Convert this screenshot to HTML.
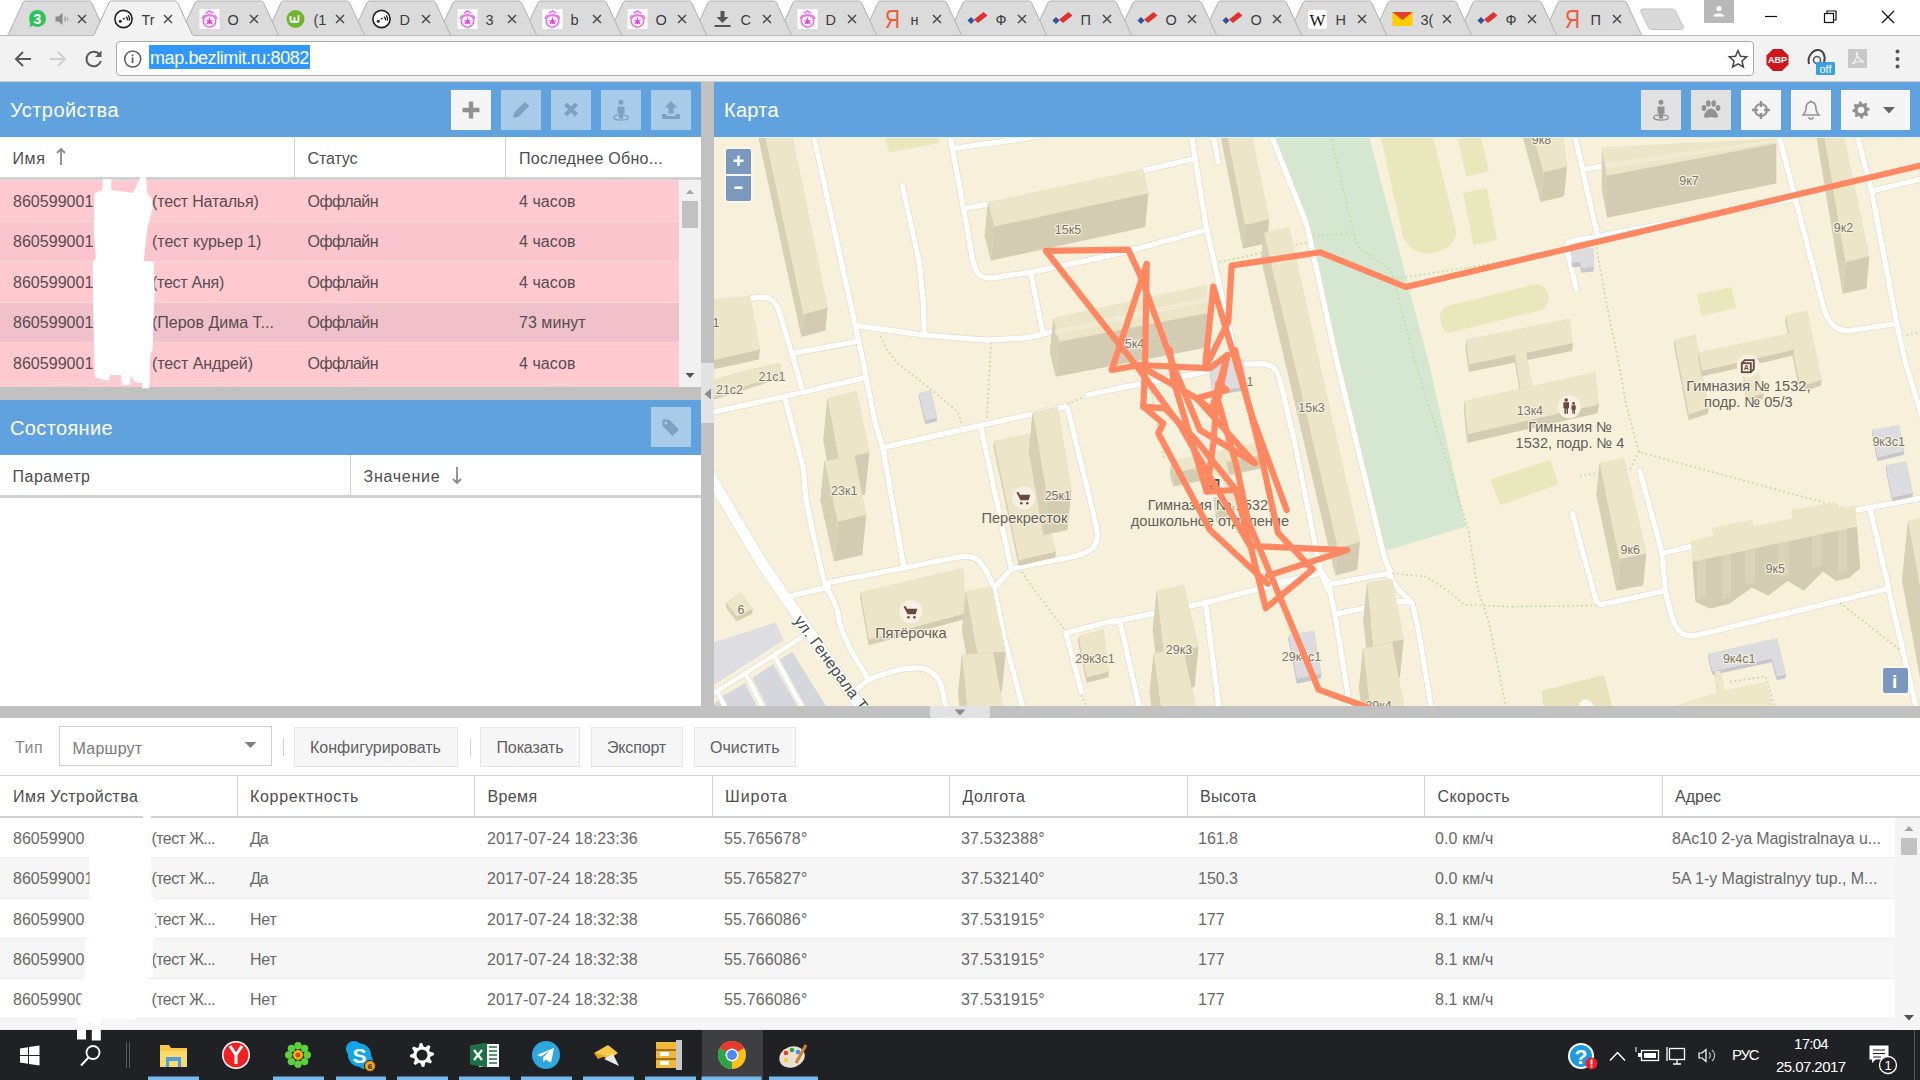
<!DOCTYPE html>
<html><head><meta charset="utf-8"><title>Traccar</title><style>
*{box-sizing:border-box;margin:0;padding:0}
html,body{width:1920px;height:1080px;overflow:hidden;background:#fff}
body{font-family:"Liberation Sans",sans-serif;position:relative;color:#404040}
.abs{position:absolute}
.t{position:absolute;white-space:nowrap;font-size:16px;line-height:20px;color:#4d4d4d}
.hdr{position:absolute;background:#5fa2dd}
.hdr .title{position:absolute;left:10px;top:16px;font-size:21px;line-height:24px;color:#fff;white-space:nowrap}
.btn{position:absolute;width:40px;height:40px;background:#f5f5f5}
.btn.dis{background:#a9cbea}
.btn svg{position:absolute;left:0;top:0}
.colh{position:absolute;background:#fff;border-right:1px solid #d0d0d0;font-size:16px;color:#404040;white-space:nowrap}
.colh span{position:absolute;left:12px;top:11px;line-height:20px}
.row{position:absolute;left:0}
.row span{position:absolute;top:10px;line-height:20px;font-size:16px;white-space:nowrap;color:#404040}
.tb{position:absolute;top:728px;height:39px;background:#f6f6f6;border:1px solid #e4e4e4;font-size:16px;color:#606060;text-align:center;line-height:37px;white-space:nowrap}
</style></head><body>
<div class="abs" style="left:0;top:0;width:1920px;height:36px;background:#fff"></div>
<div class="abs" style="left:0;top:35px;width:1920px;height:47px;background:#f2f2f2;border-bottom:1px solid #cdcdcd"></div>
<svg class="abs" style="left:0;top:0" width="1920" height="82" viewBox="0 0 1920 82"><path d="M1541.5 35.5 C1542.5 35.5 1543.1 35 1543.7 33.5 L1557.8 3 C1558.4 1.7 1559.3 1 1560.8 1 L1623.7 1 C1625.2 1 1626.1 1.7 1626.7 3 L1640.8 33.5 C1641.4 35 1642.0 35.5 1643.0 35.5 Z" fill="#dbdbdb"/><path d="M1541.5 35.5 C1542.5 35.5 1543.1 35 1543.7 33.5 L1557.8 3 C1558.4 1.7 1559.3 1 1560.8 1 L1623.7 1 C1625.2 1 1626.1 1.7 1626.7 3 L1640.8 33.5 C1641.4 35 1642.0 35.5 1643.0 35.5" fill="none" stroke="#b0b0b0" stroke-width="1"/><path d="M1456.5 35.5 C1457.5 35.5 1458.1 35 1458.7 33.5 L1472.8 3 C1473.4 1.7 1474.3 1 1475.8 1 L1538.7 1 C1540.2 1 1541.1 1.7 1541.7 3 L1555.8 33.5 C1556.4 35 1557.0 35.5 1558.0 35.5 Z" fill="#dbdbdb"/><path d="M1456.5 35.5 C1457.5 35.5 1458.1 35 1458.7 33.5 L1472.8 3 C1473.4 1.7 1474.3 1 1475.8 1 L1538.7 1 C1540.2 1 1541.1 1.7 1541.7 3 L1555.8 33.5 C1556.4 35 1557.0 35.5 1558.0 35.5" fill="none" stroke="#b0b0b0" stroke-width="1"/><path d="M1371.5 35.5 C1372.5 35.5 1373.1 35 1373.7 33.5 L1387.8 3 C1388.4 1.7 1389.3 1 1390.8 1 L1453.7 1 C1455.2 1 1456.1 1.7 1456.7 3 L1470.8 33.5 C1471.4 35 1472.0 35.5 1473.0 35.5 Z" fill="#dbdbdb"/><path d="M1371.5 35.5 C1372.5 35.5 1373.1 35 1373.7 33.5 L1387.8 3 C1388.4 1.7 1389.3 1 1390.8 1 L1453.7 1 C1455.2 1 1456.1 1.7 1456.7 3 L1470.8 33.5 C1471.4 35 1472.0 35.5 1473.0 35.5" fill="none" stroke="#b0b0b0" stroke-width="1"/><path d="M1286.5 35.5 C1287.5 35.5 1288.1 35 1288.7 33.5 L1302.8 3 C1303.4 1.7 1304.3 1 1305.8 1 L1368.7 1 C1370.2 1 1371.1 1.7 1371.7 3 L1385.8 33.5 C1386.4 35 1387.0 35.5 1388.0 35.5 Z" fill="#dbdbdb"/><path d="M1286.5 35.5 C1287.5 35.5 1288.1 35 1288.7 33.5 L1302.8 3 C1303.4 1.7 1304.3 1 1305.8 1 L1368.7 1 C1370.2 1 1371.1 1.7 1371.7 3 L1385.8 33.5 C1386.4 35 1387.0 35.5 1388.0 35.5" fill="none" stroke="#b0b0b0" stroke-width="1"/><path d="M1201.5 35.5 C1202.5 35.5 1203.1 35 1203.7 33.5 L1217.8 3 C1218.4 1.7 1219.3 1 1220.8 1 L1283.7 1 C1285.2 1 1286.1 1.7 1286.7 3 L1300.8 33.5 C1301.4 35 1302.0 35.5 1303.0 35.5 Z" fill="#dbdbdb"/><path d="M1201.5 35.5 C1202.5 35.5 1203.1 35 1203.7 33.5 L1217.8 3 C1218.4 1.7 1219.3 1 1220.8 1 L1283.7 1 C1285.2 1 1286.1 1.7 1286.7 3 L1300.8 33.5 C1301.4 35 1302.0 35.5 1303.0 35.5" fill="none" stroke="#b0b0b0" stroke-width="1"/><path d="M1116.5 35.5 C1117.5 35.5 1118.1 35 1118.7 33.5 L1132.8 3 C1133.4 1.7 1134.3 1 1135.8 1 L1198.7 1 C1200.2 1 1201.1 1.7 1201.7 3 L1215.8 33.5 C1216.4 35 1217.0 35.5 1218.0 35.5 Z" fill="#dbdbdb"/><path d="M1116.5 35.5 C1117.5 35.5 1118.1 35 1118.7 33.5 L1132.8 3 C1133.4 1.7 1134.3 1 1135.8 1 L1198.7 1 C1200.2 1 1201.1 1.7 1201.7 3 L1215.8 33.5 C1216.4 35 1217.0 35.5 1218.0 35.5" fill="none" stroke="#b0b0b0" stroke-width="1"/><path d="M1031.5 35.5 C1032.5 35.5 1033.1 35 1033.7 33.5 L1047.8 3 C1048.4 1.7 1049.3 1 1050.8 1 L1113.7 1 C1115.2 1 1116.1 1.7 1116.7 3 L1130.8 33.5 C1131.4 35 1132.0 35.5 1133.0 35.5 Z" fill="#dbdbdb"/><path d="M1031.5 35.5 C1032.5 35.5 1033.1 35 1033.7 33.5 L1047.8 3 C1048.4 1.7 1049.3 1 1050.8 1 L1113.7 1 C1115.2 1 1116.1 1.7 1116.7 3 L1130.8 33.5 C1131.4 35 1132.0 35.5 1133.0 35.5" fill="none" stroke="#b0b0b0" stroke-width="1"/><path d="M946.5 35.5 C947.5 35.5 948.1 35 948.7 33.5 L962.8 3 C963.4 1.7 964.3 1 965.8 1 L1028.7 1 C1030.2 1 1031.1 1.7 1031.7 3 L1045.8 33.5 C1046.4 35 1047.0 35.5 1048.0 35.5 Z" fill="#dbdbdb"/><path d="M946.5 35.5 C947.5 35.5 948.1 35 948.7 33.5 L962.8 3 C963.4 1.7 964.3 1 965.8 1 L1028.7 1 C1030.2 1 1031.1 1.7 1031.7 3 L1045.8 33.5 C1046.4 35 1047.0 35.5 1048.0 35.5" fill="none" stroke="#b0b0b0" stroke-width="1"/><path d="M861.5 35.5 C862.5 35.5 863.1 35 863.7 33.5 L877.8 3 C878.4 1.7 879.3 1 880.8 1 L943.7 1 C945.2 1 946.1 1.7 946.7 3 L960.8 33.5 C961.4 35 962.0 35.5 963.0 35.5 Z" fill="#dbdbdb"/><path d="M861.5 35.5 C862.5 35.5 863.1 35 863.7 33.5 L877.8 3 C878.4 1.7 879.3 1 880.8 1 L943.7 1 C945.2 1 946.1 1.7 946.7 3 L960.8 33.5 C961.4 35 962.0 35.5 963.0 35.5" fill="none" stroke="#b0b0b0" stroke-width="1"/><path d="M776.5 35.5 C777.5 35.5 778.1 35 778.7 33.5 L792.8 3 C793.4 1.7 794.3 1 795.8 1 L858.7 1 C860.2 1 861.1 1.7 861.7 3 L875.8 33.5 C876.4 35 877.0 35.5 878.0 35.5 Z" fill="#dbdbdb"/><path d="M776.5 35.5 C777.5 35.5 778.1 35 778.7 33.5 L792.8 3 C793.4 1.7 794.3 1 795.8 1 L858.7 1 C860.2 1 861.1 1.7 861.7 3 L875.8 33.5 C876.4 35 877.0 35.5 878.0 35.5" fill="none" stroke="#b0b0b0" stroke-width="1"/><path d="M691.5 35.5 C692.5 35.5 693.1 35 693.7 33.5 L707.8 3 C708.4 1.7 709.3 1 710.8 1 L773.7 1 C775.2 1 776.1 1.7 776.7 3 L790.8 33.5 C791.4 35 792.0 35.5 793.0 35.5 Z" fill="#dbdbdb"/><path d="M691.5 35.5 C692.5 35.5 693.1 35 693.7 33.5 L707.8 3 C708.4 1.7 709.3 1 710.8 1 L773.7 1 C775.2 1 776.1 1.7 776.7 3 L790.8 33.5 C791.4 35 792.0 35.5 793.0 35.5" fill="none" stroke="#b0b0b0" stroke-width="1"/><path d="M606.5 35.5 C607.5 35.5 608.1 35 608.7 33.5 L622.8 3 C623.4 1.7 624.3 1 625.8 1 L688.7 1 C690.2 1 691.1 1.7 691.7 3 L705.8 33.5 C706.4 35 707.0 35.5 708.0 35.5 Z" fill="#dbdbdb"/><path d="M606.5 35.5 C607.5 35.5 608.1 35 608.7 33.5 L622.8 3 C623.4 1.7 624.3 1 625.8 1 L688.7 1 C690.2 1 691.1 1.7 691.7 3 L705.8 33.5 C706.4 35 707.0 35.5 708.0 35.5" fill="none" stroke="#b0b0b0" stroke-width="1"/><path d="M521.5 35.5 C522.5 35.5 523.1 35 523.7 33.5 L537.8 3 C538.4 1.7 539.3 1 540.8 1 L603.7 1 C605.2 1 606.1 1.7 606.7 3 L620.8 33.5 C621.4 35 622.0 35.5 623.0 35.5 Z" fill="#dbdbdb"/><path d="M521.5 35.5 C522.5 35.5 523.1 35 523.7 33.5 L537.8 3 C538.4 1.7 539.3 1 540.8 1 L603.7 1 C605.2 1 606.1 1.7 606.7 3 L620.8 33.5 C621.4 35 622.0 35.5 623.0 35.5" fill="none" stroke="#b0b0b0" stroke-width="1"/><path d="M436.5 35.5 C437.5 35.5 438.1 35 438.7 33.5 L452.8 3 C453.4 1.7 454.3 1 455.8 1 L518.7 1 C520.2 1 521.1 1.7 521.7 3 L535.8 33.5 C536.4 35 537.0 35.5 538.0 35.5 Z" fill="#dbdbdb"/><path d="M436.5 35.5 C437.5 35.5 438.1 35 438.7 33.5 L452.8 3 C453.4 1.7 454.3 1 455.8 1 L518.7 1 C520.2 1 521.1 1.7 521.7 3 L535.8 33.5 C536.4 35 537.0 35.5 538.0 35.5" fill="none" stroke="#b0b0b0" stroke-width="1"/><path d="M350.5 35.5 C351.5 35.5 352.1 35 352.7 33.5 L366.8 3 C367.4 1.7 368.3 1 369.8 1 L432.7 1 C434.2 1 435.1 1.7 435.7 3 L449.8 33.5 C450.4 35 451.0 35.5 452.0 35.5 Z" fill="#dbdbdb"/><path d="M350.5 35.5 C351.5 35.5 352.1 35 352.7 33.5 L366.8 3 C367.4 1.7 368.3 1 369.8 1 L432.7 1 C434.2 1 435.1 1.7 435.7 3 L449.8 33.5 C450.4 35 451.0 35.5 452.0 35.5" fill="none" stroke="#b0b0b0" stroke-width="1"/><path d="M264.5 35.5 C265.5 35.5 266.1 35 266.7 33.5 L280.8 3 C281.4 1.7 282.3 1 283.8 1 L346.7 1 C348.2 1 349.1 1.7 349.7 3 L363.8 33.5 C364.4 35 365.0 35.5 366.0 35.5 Z" fill="#dbdbdb"/><path d="M264.5 35.5 C265.5 35.5 266.1 35 266.7 33.5 L280.8 3 C281.4 1.7 282.3 1 283.8 1 L346.7 1 C348.2 1 349.1 1.7 349.7 3 L363.8 33.5 C364.4 35 365.0 35.5 366.0 35.5" fill="none" stroke="#b0b0b0" stroke-width="1"/><path d="M178.5 35.5 C179.5 35.5 180.1 35 180.7 33.5 L194.8 3 C195.4 1.7 196.3 1 197.8 1 L260.7 1 C262.2 1 263.1 1.7 263.7 3 L277.8 33.5 C278.4 35 279.0 35.5 280.0 35.5 Z" fill="#dbdbdb"/><path d="M178.5 35.5 C179.5 35.5 180.1 35 180.7 33.5 L194.8 3 C195.4 1.7 196.3 1 197.8 1 L260.7 1 C262.2 1 263.1 1.7 263.7 3 L277.8 33.5 C278.4 35 279.0 35.5 280.0 35.5" fill="none" stroke="#b0b0b0" stroke-width="1"/><path d="M6.5 35.5 C7.5 35.5 8.1 35 8.7 33.5 L22.8 3 C23.4 1.7 24.3 1 25.8 1 L88.7 1 C90.2 1 91.1 1.7 91.7 3 L105.8 33.5 C106.4 35 107.0 35.5 108.0 35.5 Z" fill="#dbdbdb"/><path d="M6.5 35.5 C7.5 35.5 8.1 35 8.7 33.5 L22.8 3 C23.4 1.7 24.3 1 25.8 1 L88.7 1 C90.2 1 91.1 1.7 91.7 3 L105.8 33.5 C106.4 35 107.0 35.5 108.0 35.5" fill="none" stroke="#b0b0b0" stroke-width="1"/><path d="M1643 9 L1672 9 C1674 9 1675 10 1676 12 L1683 26 C1684 28 1683 29.500 1681 29.500 L1652 29.500 C1650 29.500 1649 28.500 1648 26.500 L1641 12 C1640 10 1641 9 1643 9Z" fill="#d9d9d9" stroke="#c4c4c4" stroke-width="1"/><rect x="0" y="35" width="1920" height="1" fill="#b9b9b9"/><path d="M92.5 35.5 C93.5 35.5 94.1 35 94.7 33.5 L108.8 3 C109.4 1.7 110.3 1 111.8 1 L174.7 1 C176.2 1 177.1 1.7 177.7 3 L191.8 33.5 C192.4 35 193.0 35.5 194.0 35.5 L194.0 37 L92.5 37 Z" fill="#f2f2f2"/><path d="M92.5 35.5 C93.5 35.5 94.1 35 94.7 33.5 L108.8 3 C109.4 1.7 110.3 1 111.8 1 L174.7 1 C176.2 1 177.1 1.7 177.7 3 L191.8 33.5 C192.4 35 193.0 35.5 194.0 35.5" fill="none" stroke="#ababab" stroke-width="1"/><path d="M78.0 15l8 8m0-8l-8 8" stroke="#4a4a4a" stroke-width="1.5" fill="none"/><circle cx="37.5" cy="18.5" r="8.5" fill="#2fc15a"/><path d="M29.5 27l1-5l4 3z" fill="#2fc15a"/><text x="37.5" y="24" font-size="14" font-weight="bold" fill="#fff" text-anchor="middle" font-family="Liberation Sans">3</text><path d="M55.5 16.500h3l4-3.500v12l-4-3.500h-3z" fill="#8a8a8a"/><path d="M65.0 16.500v5M67.5 17.500v3" stroke="#9a9a9a" stroke-width="1.2"/><path d="M164.0 15l8 8m0-8l-8 8" stroke="#4a4a4a" stroke-width="1.5" fill="none"/><text x="141.5" y="24.500" font-size="14.500" fill="#3c3c3c" font-family="Liberation Sans">Tr</text><g transform="translate(123.5,19)"><circle r="8.6" fill="#fff" stroke="#222" stroke-width="1.6"/><circle cx="-3.2" cy="2.2" r="1.5" fill="#222"/><path d="M-0.5 0.3l1.6-1.2M2.5-2.2a4 4 0 0 1 1.6 3.6M4.6-3.6a6 6 0 0 1 1.3 5.2" stroke="#222" stroke-width="1.4" fill="none"/></g><path d="M250.0 15l8 8m0-8l-8 8" stroke="#4a4a4a" stroke-width="1.5" fill="none"/><text x="227.5" y="24.500" font-size="14.500" fill="#3c3c3c" font-family="Liberation Sans">O</text><g transform="translate(199.5,9) scale(1.25)"><rect width="16" height="16" fill="#fff"/><circle cx="8" cy="9.500" r="5" fill="none" stroke="#ee66ee" stroke-width="1.200"/><path d="M3 5.500h10M5 3.500l3-2l3 2M2 8l1.500-3M14 8l-1.500-3" stroke="#ee66ee" stroke-width="1.100" fill="none"/><path d="M5.500 9.500h5M8 7v5M6 12l2-2.500l2 2.500" stroke="#e040e0" stroke-width="1.100" fill="none"/></g><path d="M336.0 15l8 8m0-8l-8 8" stroke="#4a4a4a" stroke-width="1.5" fill="none"/><text x="313.5" y="24.500" font-size="14.500" fill="#3c3c3c" font-family="Liberation Sans">(1</text><circle cx="295.5" cy="19" r="9" fill="#6fb62c"/><path d="M290.5 16v4a2 2 0 0 0 4 0v-3m0 3a2 2 0 0 0 4 0v-5" stroke="#fff" stroke-width="1.8" fill="none"/><path d="M422.0 15l8 8m0-8l-8 8" stroke="#4a4a4a" stroke-width="1.5" fill="none"/><text x="399.5" y="24.500" font-size="14.500" fill="#3c3c3c" font-family="Liberation Sans">D</text><g transform="translate(381.5,19)"><circle r="8.6" fill="#fff" stroke="#222" stroke-width="1.6"/><circle cx="-3.2" cy="2.2" r="1.5" fill="#222"/><path d="M-0.5 0.3l1.6-1.2M2.5-2.2a4 4 0 0 1 1.6 3.6M4.6-3.6a6 6 0 0 1 1.3 5.2" stroke="#222" stroke-width="1.4" fill="none"/></g><path d="M508.0 15l8 8m0-8l-8 8" stroke="#4a4a4a" stroke-width="1.5" fill="none"/><text x="485.5" y="24.500" font-size="14.500" fill="#3c3c3c" font-family="Liberation Sans">3</text><g transform="translate(457.5,9) scale(1.25)"><rect width="16" height="16" fill="#fff"/><circle cx="8" cy="9.500" r="5" fill="none" stroke="#ee66ee" stroke-width="1.200"/><path d="M3 5.500h10M5 3.500l3-2l3 2M2 8l1.500-3M14 8l-1.500-3" stroke="#ee66ee" stroke-width="1.100" fill="none"/><path d="M5.500 9.500h5M8 7v5M6 12l2-2.500l2 2.500" stroke="#e040e0" stroke-width="1.100" fill="none"/></g><path d="M593.0 15l8 8m0-8l-8 8" stroke="#4a4a4a" stroke-width="1.5" fill="none"/><text x="570.5" y="24.500" font-size="14.500" fill="#3c3c3c" font-family="Liberation Sans">b</text><g transform="translate(542.5,9) scale(1.25)"><rect width="16" height="16" fill="#fff"/><circle cx="8" cy="9.500" r="5" fill="none" stroke="#ee66ee" stroke-width="1.200"/><path d="M3 5.500h10M5 3.500l3-2l3 2M2 8l1.500-3M14 8l-1.500-3" stroke="#ee66ee" stroke-width="1.100" fill="none"/><path d="M5.500 9.500h5M8 7v5M6 12l2-2.500l2 2.500" stroke="#e040e0" stroke-width="1.100" fill="none"/></g><path d="M678.0 15l8 8m0-8l-8 8" stroke="#4a4a4a" stroke-width="1.5" fill="none"/><text x="655.5" y="24.500" font-size="14.500" fill="#3c3c3c" font-family="Liberation Sans">O</text><g transform="translate(627.5,9) scale(1.25)"><rect width="16" height="16" fill="#fff"/><circle cx="8" cy="9.500" r="5" fill="none" stroke="#ee66ee" stroke-width="1.200"/><path d="M3 5.500h10M5 3.500l3-2l3 2M2 8l1.500-3M14 8l-1.500-3" stroke="#ee66ee" stroke-width="1.100" fill="none"/><path d="M5.500 9.500h5M8 7v5M6 12l2-2.500l2 2.500" stroke="#e040e0" stroke-width="1.100" fill="none"/></g><path d="M763.0 15l8 8m0-8l-8 8" stroke="#4a4a4a" stroke-width="1.5" fill="none"/><text x="740.5" y="24.500" font-size="14.500" fill="#3c3c3c" font-family="Liberation Sans">C</text><path d="M720.5 11h4v6h4l-6 6l-6-6h4z" fill="#555"/><rect x="714.5" y="25" width="16" height="2" fill="#555"/><path d="M848.0 15l8 8m0-8l-8 8" stroke="#4a4a4a" stroke-width="1.5" fill="none"/><text x="825.5" y="24.500" font-size="14.500" fill="#3c3c3c" font-family="Liberation Sans">D</text><g transform="translate(797.5,9) scale(1.25)"><rect width="16" height="16" fill="#fff"/><circle cx="8" cy="9.500" r="5" fill="none" stroke="#ee66ee" stroke-width="1.200"/><path d="M3 5.500h10M5 3.500l3-2l3 2M2 8l1.500-3M14 8l-1.500-3" stroke="#ee66ee" stroke-width="1.100" fill="none"/><path d="M5.500 9.500h5M8 7v5M6 12l2-2.500l2 2.500" stroke="#e040e0" stroke-width="1.100" fill="none"/></g><path d="M933.0 15l8 8m0-8l-8 8" stroke="#4a4a4a" stroke-width="1.5" fill="none"/><text x="910.5" y="24.500" font-size="14.500" fill="#3c3c3c" font-family="Liberation Sans">н</text><text x="892.5" y="28" font-size="26" fill="#ee5a3a" text-anchor="middle" font-family="Liberation Sans" transform="translate(892.5 0) scale(0.8 1) translate(-892.5 0)">Я</text><path d="M1018.0 15l8 8m0-8l-8 8" stroke="#4a4a4a" stroke-width="1.5" fill="none"/><text x="995.5" y="24.500" font-size="14.500" fill="#3c3c3c" font-family="Liberation Sans">Ф</text><g transform="translate(977.5,18)"><path d="M-10 2.500l3.500-3.500l3.500 3.500l-3.500 3.500z" fill="#2f4f9f"/><path d="M-3.500 1.500l9.500-7.500l4 3.500l-9.500 7.500z" fill="#e03030"/></g><path d="M1103.0 15l8 8m0-8l-8 8" stroke="#4a4a4a" stroke-width="1.5" fill="none"/><text x="1080.5" y="24.500" font-size="14.500" fill="#3c3c3c" font-family="Liberation Sans">П</text><g transform="translate(1062.5,18)"><path d="M-10 2.500l3.500-3.500l3.500 3.500l-3.500 3.500z" fill="#2f4f9f"/><path d="M-3.500 1.500l9.500-7.500l4 3.500l-9.500 7.500z" fill="#e03030"/></g><path d="M1188.0 15l8 8m0-8l-8 8" stroke="#4a4a4a" stroke-width="1.5" fill="none"/><text x="1165.5" y="24.500" font-size="14.500" fill="#3c3c3c" font-family="Liberation Sans">О</text><g transform="translate(1147.5,18)"><path d="M-10 2.500l3.500-3.500l3.500 3.500l-3.500 3.500z" fill="#2f4f9f"/><path d="M-3.500 1.500l9.500-7.500l4 3.500l-9.500 7.500z" fill="#e03030"/></g><path d="M1273.0 15l8 8m0-8l-8 8" stroke="#4a4a4a" stroke-width="1.5" fill="none"/><text x="1250.5" y="24.500" font-size="14.500" fill="#3c3c3c" font-family="Liberation Sans">О</text><g transform="translate(1232.5,18)"><path d="M-10 2.500l3.500-3.500l3.500 3.500l-3.500 3.500z" fill="#2f4f9f"/><path d="M-3.500 1.500l9.500-7.500l4 3.500l-9.500 7.500z" fill="#e03030"/></g><path d="M1358.0 15l8 8m0-8l-8 8" stroke="#4a4a4a" stroke-width="1.5" fill="none"/><text x="1335.5" y="24.500" font-size="14.500" fill="#3c3c3c" font-family="Liberation Sans">H</text><rect x="1308.0" y="10" width="19" height="19" rx="3" fill="#fff"/><text x="1317.5" y="26" font-size="17" fill="#111" text-anchor="middle" font-family="Liberation Serif">W</text><path d="M1443.0 15l8 8m0-8l-8 8" stroke="#4a4a4a" stroke-width="1.5" fill="none"/><text x="1420.5" y="24.500" font-size="14.500" fill="#3c3c3c" font-family="Liberation Sans">3(</text><rect x="1392.5" y="12" width="20" height="14" fill="#ffcc00"/><path d="M1392.5 12l10 8l10-8z" fill="#e84030"/><path d="M1528.0 15l8 8m0-8l-8 8" stroke="#4a4a4a" stroke-width="1.5" fill="none"/><text x="1505.5" y="24.500" font-size="14.500" fill="#3c3c3c" font-family="Liberation Sans">Ф</text><g transform="translate(1487.5,18)"><path d="M-10 2.500l3.500-3.500l3.500 3.500l-3.500 3.500z" fill="#2f4f9f"/><path d="M-3.500 1.500l9.500-7.500l4 3.500l-9.500 7.500z" fill="#e03030"/></g><path d="M1613.0 15l8 8m0-8l-8 8" stroke="#4a4a4a" stroke-width="1.5" fill="none"/><text x="1590.5" y="24.500" font-size="14.500" fill="#3c3c3c" font-family="Liberation Sans">П</text><text x="1572.5" y="28" font-size="26" fill="#ee5a3a" text-anchor="middle" font-family="Liberation Sans" transform="translate(1572.5 0) scale(0.8 1) translate(-1572.5 0)">Я</text><rect x="1704" y="0" width="30" height="23" fill="#b8b8b8"/><circle cx="1719" cy="8.500" r="2.6" fill="#fff"/><path d="M1713.500 16.500c0-4 11-4 11 0z" fill="#fff"/><path d="M1765 16.500h12" stroke="#111" stroke-width="1.2"/><rect x="1824.500" y="13.500" width="9" height="9" fill="none" stroke="#111" stroke-width="1.2"/><path d="M1827 13.500v-2.500h9v9h-2.500" fill="none" stroke="#111" stroke-width="1.2"/><path d="M1882 11l12 12m0-12l-12 12" stroke="#111" stroke-width="1.3"/><path d="M31 59H16m7-7l-7 7l7 7" stroke="#5a5a5a" stroke-width="2" fill="none"/><path d="M50 59h15m-7-7l7 7l-7 7" stroke="#cfcfcf" stroke-width="2" fill="none"/><path d="M99.500 54.500a7.300 7.300 0 1 0 1.300 6.500" stroke="#5a5a5a" stroke-width="2" fill="none"/><path d="M101.500 50.500v6.500h-6.500z" fill="#5a5a5a"/><rect x="116.500" y="41.500" width="1637" height="34" rx="3.500" fill="#fff" stroke="#ababab"/><circle cx="132.700" cy="59" r="8" fill="none" stroke="#5a5a5a" stroke-width="1.5"/><rect x="131.700" y="57.500" width="1.700" height="5.500" fill="#5a5a5a"/><rect x="131.700" y="54.500" width="1.700" height="1.800" fill="#5a5a5a"/><rect x="149" y="45" width="161" height="24" fill="#3297fd"/><path d="M1738 50.500l2.500 5.700l6.200 0.600l-4.700 4.100l1.400 6.100l-5.400-3.200l-5.400 3.200l1.400-6.100l-4.700-4.100l6.200-0.600z" fill="none" stroke="#444" stroke-width="1.5"/><path d="M1773 49h9l6.500 6.500v9l-6.500 6.500h-9l-6.500-6.500v-9z" fill="#d0161b"/><text x="1777.500" y="63" font-size="9" font-weight="bold" fill="#fff" text-anchor="middle" font-family="Liberation Sans">ABP</text><path d="M1809 64c-2-8 4-14 9-14s8 6 6 12" fill="none" stroke="#444" stroke-width="2"/><circle cx="1817" cy="60" r="3.500" fill="none" stroke="#555" stroke-width="1.5"/><rect x="1816" y="62" width="19" height="13" rx="1.500" fill="#3aa0e0"/><text x="1825.500" y="72.500" font-size="11" fill="#fff" text-anchor="middle" font-family="Liberation Sans">off</text><rect x="1848" y="49" width="19" height="19" fill="#c8c8c8"/><path d="M1852 64c4-3 6-9 5-12c-2 0 0 7 7 10c-4-1-9 0-12 2z" fill="none" stroke="#f2f2f2" stroke-width="1.2"/><circle cx="1897.500" cy="51.500" r="2" fill="#555"/><circle cx="1897.500" cy="59" r="2" fill="#555"/><circle cx="1897.500" cy="66.500" r="2" fill="#555"/></svg>
<div class="t" style="left:150.0px;top:46.8px;font-size:18px;line-height:22px;color:#fff;letter-spacing:-0.407px;">map.bezlimit.ru:8082</div>
<div class="abs" style="left:0;top:82px;width:1920px;height:636px;background:#c1c1c1"></div>
<div class="hdr" style="left:0;top:82px;width:701px;height:55px"></div>
<div class="t" style="left:10.0px;top:98.3px;font-size:20px;line-height:25px;color:#fff;letter-spacing:0.438px;">Устройства</div>
<div class="btn" style="left:451px;top:90px;width:40px;background:#f5f5f5"><svg width="40" height="40" viewBox="0 0 40 40"><path d="M17.800 11.500h4.400v6.300h6.300v4.400h-6.300v6.300h-4.400v-6.300h-6.300v-4.400h6.300z" fill="#919191"/></svg></div>
<div class="btn" style="left:501px;top:90px;width:40px;background:#a9cbea"><svg width="40" height="40" viewBox="0 0 40 40"><path d="M12.500 27.500l1-5l10.500-10.500l4 4l-10.500 10.500z M22 14l4 4" fill="#7f9fc3" stroke="#7f9fc3" stroke-width="0.500"/></svg></div>
<div class="btn" style="left:551px;top:90px;width:40px;background:#a9cbea"><svg width="40" height="40" viewBox="0 0 40 40"><path d="M13.500 15.500l2.500-2.500l4 4l4-4l2.500 2.500l-4 4l4 4l-2.500 2.500l-4-4l-4 4l-2.500-2.500l4-4z" fill="#7f9fc3" stroke="#7f9fc3" stroke-width="1" stroke-linejoin="round"/></svg></div>
<div class="btn" style="left:601px;top:90px;width:40px;background:#a9cbea"><svg width="40" height="40" viewBox="0 0 40 40"><circle cx="20" cy="12.300" r="2.500" fill="#7f9fc3"/><path d="M16.500 16.500h7v7h-1.500v5h-4v-5h-1.500z" fill="#7f9fc3"/><ellipse cx="20" cy="27.500" rx="7.300" ry="2.600" fill="none" stroke="#7f9fc3" stroke-width="1.300"/></svg></div>
<div class="btn" style="left:651px;top:90px;width:40px;background:#a9cbea"><svg width="40" height="40" viewBox="0 0 40 40"><path d="M20 11l6.500 6.500h-4v6h-5v-6h-4z" fill="#7f9fc3"/><path d="M11 24h4.500v2h9v-2h4.500v5h-18z" fill="#7f9fc3"/></svg></div>
<div class="abs" style="left:0;top:137px;width:701px;height:43px;background:#fff;border-bottom:3px solid #d0d0d0"></div>
<div class="abs" style="left:294px;top:137px;width:1px;height:40px;background:#d0d0d0"></div>
<div class="abs" style="left:505px;top:137px;width:1px;height:40px;background:#d0d0d0"></div>
<div class="t" style="left:12.5px;top:148.8px;font-size:16px;line-height:20px;color:#4d4d4d;letter-spacing:0.609px;">Имя</div>
<svg class="abs" style="left:54.5px;top:147px" width="12" height="20" viewBox="0 0 12 20"><path d="M6 2v16M2 6l4-4l4 4" stroke="#8a8a8a" stroke-width="1.800" fill="none"/></svg>
<div class="t" style="left:307.5px;top:148.8px;font-size:16px;line-height:20px;color:#4d4d4d;letter-spacing:-0.104px;">Статус</div>
<div class="t" style="left:519.0px;top:148.8px;font-size:16px;line-height:20px;color:#4d4d4d;letter-spacing:0.265px;">Последнее Обно...</div>
<div class="abs" style="left:0;top:180px;width:679px;height:40.5px;background:#ffc9d0;border-top:1px solid #f3d9dc"></div>
<div class="t" style="left:13.0px;top:191.8px;font-size:16px;line-height:20px;color:#584c50;letter-spacing:0.038px;">860599001</div>
<div class="t" style="left:152.0px;top:191.8px;font-size:16px;line-height:20px;color:#584c50;letter-spacing:-0.160px;">(тест Наталья)</div>
<div class="t" style="left:307.5px;top:191.8px;font-size:16px;line-height:20px;color:#584c50;letter-spacing:-0.569px;">Оффлайн</div>
<div class="t" style="left:519.0px;top:191.8px;font-size:16px;line-height:20px;color:#584c50;letter-spacing:0.042px;">4 часов</div>
<div class="abs" style="left:0;top:220.5px;width:679px;height:40.5px;background:#fac5cc;border-top:1px solid #f3d9dc"></div>
<div class="t" style="left:13.0px;top:232.3px;font-size:16px;line-height:20px;color:#584c50;letter-spacing:0.038px;">860599001</div>
<div class="t" style="left:152.0px;top:232.3px;font-size:16px;line-height:20px;color:#584c50;letter-spacing:-0.029px;">(тест курьер 1)</div>
<div class="t" style="left:307.5px;top:232.3px;font-size:16px;line-height:20px;color:#584c50;letter-spacing:-0.569px;">Оффлайн</div>
<div class="t" style="left:519.0px;top:232.3px;font-size:16px;line-height:20px;color:#584c50;letter-spacing:0.042px;">4 часов</div>
<div class="abs" style="left:0;top:261px;width:679px;height:40.5px;background:#ffc9d0;border-top:1px solid #f3d9dc"></div>
<div class="t" style="left:13.0px;top:272.8px;font-size:16px;line-height:20px;color:#584c50;letter-spacing:0.038px;">860599001</div>
<div class="t" style="left:152.0px;top:272.8px;font-size:16px;line-height:20px;color:#584c50;letter-spacing:-0.269px;">(тест Аня)</div>
<div class="t" style="left:307.5px;top:272.8px;font-size:16px;line-height:20px;color:#584c50;letter-spacing:-0.569px;">Оффлайн</div>
<div class="t" style="left:519.0px;top:272.8px;font-size:16px;line-height:20px;color:#584c50;letter-spacing:0.042px;">4 часов</div>
<div class="abs" style="left:0;top:301.5px;width:679px;height:40.5px;background:#f0c1ca;border-top:1px solid #f3d9dc"></div>
<div class="t" style="left:13.0px;top:313.3px;font-size:16px;line-height:20px;color:#584c50;letter-spacing:0.038px;">860599001</div>
<div class="t" style="left:152.0px;top:313.3px;font-size:16px;line-height:20px;color:#584c50;letter-spacing:-0.001px;">(Перов Дима Т...</div>
<div class="t" style="left:307.5px;top:313.3px;font-size:16px;line-height:20px;color:#584c50;letter-spacing:-0.569px;">Оффлайн</div>
<div class="t" style="left:519.0px;top:313.3px;font-size:16px;line-height:20px;color:#584c50;letter-spacing:0.041px;">73 минут</div>
<div class="abs" style="left:0;top:342px;width:679px;height:40px;background:#ffc9d0;border-top:1px solid #f3d9dc"></div>
<div class="t" style="left:13.0px;top:353.8px;font-size:16px;line-height:20px;color:#584c50;letter-spacing:0.038px;">860599001</div>
<div class="t" style="left:152.0px;top:353.8px;font-size:16px;line-height:20px;color:#584c50;letter-spacing:-0.085px;">(тест Андрей)</div>
<div class="t" style="left:307.5px;top:353.8px;font-size:16px;line-height:20px;color:#584c50;letter-spacing:-0.569px;">Оффлайн</div>
<div class="t" style="left:519.0px;top:353.8px;font-size:16px;line-height:20px;color:#584c50;letter-spacing:0.042px;">4 часов</div>
<div class="abs" style="left:0;top:382px;width:679px;height:5px;background:#ffc9d0;border-top:1px solid #f3d9dc"></div>
<div class="abs" style="left:679px;top:180px;width:22px;height:207px;background:#f1f1f1"></div>
<div class="abs" style="left:682px;top:201px;width:16px;height:27px;background:#c1c1c1"></div>
<svg class="abs" style="left:679px;top:180px" width="22" height="207"><path d="M7 14l4-4.500l4 4.500z" fill="#a3a3a3"/><path d="M6.500 193l4.500 5l4.500-5z" fill="#505050"/></svg>
<svg class="abs" style="left:80px;top:170px" width="90" height="225" viewBox="80 170 90 225"><path d="M102.500 179.200 L111.200 179.200 L111.200 190 L132 193 L134 191.100 L141.600 174.800 L146 174.800 L147.100 193.300 L151.400 197.700 L152.500 208.500 L147.100 230.300 L143.800 260.800 L153.600 261.900 L154.700 291.300 L153.600 317.400 L152.500 350 L150.300 354.400 L149.300 388.200 L142.300 388.200 L142.300 382.700 L136.200 382.700 L130.800 376.200 L129.700 384.900 L122 384.900 L121 375.100 L110 375.100 L109 380.500 L102.500 379.500 L94.800 377.300 L93.700 330 L92.700 263 L95.900 258 L93.700 230.300 L94.800 193.300 L102.500 190 Z" fill="#fff"/></svg>
<div class="hdr" style="left:0;top:400px;width:701px;height:55px"></div>
<div class="t" style="left:10.0px;top:416.3px;font-size:20px;line-height:25px;color:#fff;letter-spacing:0.356px;">Состояние</div>
<div class="btn" style="left:651px;top:407px;width:40px;background:#a9cbea"><svg width="40" height="40" viewBox="0 0 40 40"><path d="M11.500 12.500h6.500l10 10l-6.500 6.500l-10-10z" fill="#7f9fc3"/><circle cx="15" cy="16" r="1.600" fill="#a9cbea"/></svg></div>
<div class="abs" style="left:0;top:455px;width:701px;height:251px;background:#fff"></div>
<div class="abs" style="left:0;top:495px;width:701px;height:3px;background:#d0d0d0"></div>
<div class="abs" style="left:350px;top:455px;width:1px;height:40px;background:#d0d0d0"></div>
<div class="t" style="left:12.5px;top:466.8px;font-size:16px;line-height:20px;color:#4d4d4d;letter-spacing:0.521px;">Параметр</div>
<div class="t" style="left:363.5px;top:466.8px;font-size:16px;line-height:20px;color:#4d4d4d;letter-spacing:0.748px;">Значение</div>
<svg class="abs" style="left:450.5px;top:465px" width="12" height="20" viewBox="0 0 12 20"><path d="M6 2v16M2 14l4 4l4-4" stroke="#8a8a8a" stroke-width="1.800" fill="none"/></svg>
<div class="abs" style="left:701px;top:363px;width:13px;height:60px;background:#e2e2e2"></div>
<svg class="abs" style="left:701px;top:386px" width="13" height="16"><path d="M10 2.500v11l-6.500-5.500z" fill="#8c8c8c"/></svg>
<div class="abs" style="left:930px;top:706px;width:60px;height:12px;background:#e2e2e2"></div>
<svg class="abs" style="left:952px;top:706px" width="16" height="12"><path d="M2.500 3.500h11l-5.500 6z" fill="#8c8c8c"/></svg>
<div class="hdr" style="left:714px;top:82px;width:1206px;height:55px"></div>
<div class="t" style="left:724.0px;top:98.3px;font-size:20px;line-height:25px;color:#fff;letter-spacing:0.294px;">Карта</div>
<div class="btn" style="left:1641px;top:90px;width:40px;background:#e1e1e1"><svg width="40" height="40" viewBox="0 0 40 40"><circle cx="20" cy="12.300" r="2.500" fill="#919191"/><path d="M16.500 16.500h7v7h-1.500v5h-4v-5h-1.500z" fill="#919191"/><ellipse cx="20" cy="27.500" rx="7.300" ry="2.600" fill="none" stroke="#919191" stroke-width="1.300"/></svg></div>
<div class="btn" style="left:1691px;top:90px;width:40px;background:#e1e1e1"><svg width="40" height="40" viewBox="0 0 40 40"><ellipse cx="13" cy="18" rx="2.300" ry="3" fill="#919191"/><ellipse cx="27" cy="18" rx="2.300" ry="3" fill="#919191"/><ellipse cx="17.300" cy="13.500" rx="2.300" ry="3.200" fill="#919191"/><ellipse cx="22.700" cy="13.500" rx="2.300" ry="3.200" fill="#919191"/><path d="M20 18.500c3 0 7 5 7 7.500c0 2.500-3 2-7 1c-4 1-7 1.500-7-1c0-2.500 4-7.500 7-7.500z" fill="#919191"/></svg></div>
<div class="btn" style="left:1741px;top:90px;width:40px;background:#f5f5f5"><svg width="40" height="40" viewBox="0 0 40 40"><circle cx="20" cy="20" r="6" fill="none" stroke="#919191" stroke-width="2"/><path d="M20 11v6M20 23v6M11 20h6M23 20h6" stroke="#919191" stroke-width="2.400"/></svg></div>
<div class="btn" style="left:1791px;top:90px;width:40px;background:#f5f5f5"><svg width="40" height="40" viewBox="0 0 40 40"><path d="M20 12c-4 0-5 3.500-5 7c0 3-1.500 4.500-3 6h16c-1.500-1.500-3-3-3-6c0-3.500-1-7-5-7z" fill="none" stroke="#919191" stroke-width="1.600"/><path d="M18 27a2 2 0 0 0 4 0" fill="none" stroke="#919191" stroke-width="1.500"/><path d="M20 10.500v1.500" stroke="#919191" stroke-width="1.800"/></svg></div>
<div class="btn" style="left:1841px;top:90px;width:69px;background:#f5f5f5"><svg width="69" height="40" viewBox="0 0 69 40"><polygon points="28.53,18.30 28.70,20.00 26.47,21.29 26.10,22.53 27.23,24.83 26.15,26.15 23.67,25.49 22.53,26.10 21.70,28.53 20.00,28.70 18.71,26.47 17.47,26.10 15.17,27.23 13.85,26.15 14.51,23.67 13.90,22.53 11.47,21.70 11.30,20.00 13.53,18.71 13.90,17.47 12.77,15.17 13.85,13.85 16.33,14.51 17.47,13.90 18.30,11.47 20.00,11.30 21.29,13.53 22.53,13.90 24.83,12.77 26.15,13.85 25.49,16.33 26.10,17.47" fill="#919191"/><circle cx="20" cy="20" r="3.300" fill="#f5f5f5"/><path d="M42 17h12l-6 6.500z" fill="#666"/></svg></div>
<svg class="abs" style="left:714px;top:137px" width="1206" height="569" viewBox="714 137 1206 569"><rect x="714" y="137" width="1206" height="569" fill="#f7f1dc"/><polygon points="1274.4,134.9 1308.8,226.6 1340.0,362.0 1386.9,558.9 1385.0,551.0 1466.1,526.6 1428.6,362.0 1368.6,134.9" fill="#d5e7d0" /><polygon points="884.8,136.0 941.1,136.0 938.0,143.2 889.0,152.6" fill="#e9e8bd" /><path d="M1380.7 136.0 L1432.8 136.0 L1455.7 228.7 C1460.9 253.7 1410.9 266.2 1402.5 234.9 Z" fill="#e9e8bd"/><polygon points="1457.8,139.1 1480.7,136.0 1489.0,171.4 1466.1,176.6" fill="#e9e8bd" /><polygon points="1463.0,193.2 1486.9,188.0 1497.3,240.1 1473.4,245.3" fill="#e9e8bd" /><path d="M1446.9 306.0 L1532.5 285.0 C1550.2 280.1 1555.1 307.6 1538.9 310.8 L1453.4 331.8 C1438.8 336.7 1435.6 309.2 1446.9 306.0 Z" fill="#e9e8bd"/><polygon points="1696.9,294.5 1731.8,287.1 1736.0,308.3 1701.1,315.7" fill="#e9e8bd" /><polygon points="1490.5,479.4 1550.2,460.0 1558.3,484.3 1500.2,505.3" fill="#e9e8bd" /><polygon points="711.9,642.9 775.5,622.5 783.8,640.2 711.9,686.0" fill="#dddde2" /><polygon points="711.9,705.8 723.4,695.4 745.2,682.9 758.8,710.0 711.9,710.0" fill="#d6d6dd" /><polygon points="752.5,677.7 773.4,664.2 799.4,710.0 768.2,710.0" fill="#d6d6dd" /><polygon points="779.6,660.0 792.1,651.7 828.6,710.0 807.8,710.0" fill="#d6d6dd" /><path d="M809.6 117.0 L861.8 355.4 Q863.3 362.2 864.6 369.1 L873.1 413.1 Q874.4 420.0 876.4 426.7 L880.7 440.7 Q882.8 447.4 884.0 454.3 L904.0 568.2" fill="none" stroke="#e6dfcd" stroke-width="6.8" stroke-linecap="round" stroke-linejoin="round"/><path d="M902.5 186.0 L910.4 221.8 Q911.9 228.7 913.4 235.5 L917.7 255.2 Q919.2 262.0 919.9 269.0 L922.7 296.7 Q923.4 303.7 923.6 310.7 L924.4 333.9" fill="none" stroke="#e6dfcd" stroke-width="6.8" stroke-linecap="round" stroke-linejoin="round"/><path d="M855.5 325.5 L915.4 333.9 Q922.3 334.9 929.3 335.5 L977.9 339.5 Q984.8 340.1 991.8 339.8 L1019.5 338.4 Q1026.5 338.0 1033.3 336.4 L1052.5 331.8" fill="none" stroke="#e6dfcd" stroke-width="6.8" stroke-linecap="round" stroke-linejoin="round"/><path d="M949.4 132.8 L960.6 192.6 Q961.9 199.5 963.1 206.4 L972.2 257.2 Q973.4 264.1 975.5 269.3 L975.5 269.3 Q977.5 274.5 982.2 276.6 L982.2 276.6 Q986.9 278.7 993.8 277.7 L1023.7 273.4 Q1030.7 272.4 1037.5 271.0 L1107.2 256.2 Q1114.0 254.7 1120.8 252.9 L1206.7 229.7" fill="none" stroke="#e6dfcd" stroke-width="6.8" stroke-linecap="round" stroke-linejoin="round"/><path d="M953.6 148.5 L1041.1 136.0" fill="none" stroke="#e6dfcd" stroke-width="6.8" stroke-linecap="round" stroke-linejoin="round"/><path d="M967.1 207.8 L989.0 204.1" fill="none" stroke="#e6dfcd" stroke-width="6.8" stroke-linecap="round" stroke-linejoin="round"/><path d="M1030.7 272.4 L1042.8 332.8" fill="none" stroke="#e6dfcd" stroke-width="6.8" stroke-linecap="round" stroke-linejoin="round"/><path d="M750.5 298.5 L760.2 297.2 Q767.1 296.4 771.8 300.0 L771.8 300.0 Q776.5 303.7 778.6 309.9 L778.6 309.9 Q780.7 316.2 782.7 322.9 L792.2 355.3 Q794.2 362.0 796.2 368.7 L801.5 387.0" fill="none" stroke="#e6dfcd" stroke-width="6.8" stroke-linecap="round" stroke-linejoin="round"/><path d="M795.6 352.8 L858.0 341.3" fill="none" stroke="#e6dfcd" stroke-width="6.8" stroke-linecap="round" stroke-linejoin="round"/><path d="M1191.1 132.8 L1204.6 217.6 Q1205.7 224.5 1207.2 231.3 L1236.9 362.0" fill="none" stroke="#e6dfcd" stroke-width="6.8" stroke-linecap="round" stroke-linejoin="round"/><path d="M1213.0 134.9 L1218.2 162.0" fill="none" stroke="#e6dfcd" stroke-width="6.8" stroke-linecap="round" stroke-linejoin="round"/><path d="M1144.2 170.3 L1193.6 158.9" fill="none" stroke="#e6dfcd" stroke-width="6.8" stroke-linecap="round" stroke-linejoin="round"/><path d="M1270.2 132.8 L1304.1 218.0 Q1306.7 224.5 1308.2 231.3 L1335.4 355.2 Q1336.9 362.0 1338.6 368.8 L1383.2 553.1 Q1384.8 559.9 1388.0 566.2 L1390.0 570.3 Q1393.2 576.6 1390.0 574.5 L1390.0 574.5 Q1386.9 572.5 1390.8 578.3 L1395.5 585.4 Q1399.4 591.2 1404.8 595.7 L1406.5 597.2 Q1411.9 601.7 1413.5 608.5 L1416.6 621.9 Q1418.2 628.8 1419.3 635.7 L1431.7 710.0" fill="none" stroke="#e6dfcd" stroke-width="6.8" stroke-linecap="round" stroke-linejoin="round"/><path d="M1574.3 132.8 L1597.5 236.0" fill="none" stroke="#e6dfcd" stroke-width="6.8" stroke-linecap="round" stroke-linejoin="round"/><path d="M1587.0 168.7 L1602.4 166.2" fill="none" stroke="#e6dfcd" stroke-width="6.8" stroke-linecap="round" stroke-linejoin="round"/><path d="M1576.4 289.3 L1568.0 253.8 Q1566.4 247.0 1566.9 244.8 L1566.9 244.8 Q1567.3 242.7 1569.7 241.7 L1569.7 241.7 Q1572.2 240.6 1579.1 239.5 L1590.6 237.5 Q1597.5 236.4 1604.4 235.1 L1794.2 198.7" fill="none" stroke="#e6dfcd" stroke-width="6.8" stroke-linecap="round" stroke-linejoin="round"/><path d="M1778.3 132.8 L1780.9 142.9 Q1782.6 149.7 1784.3 156.5 L1793.5 191.6 Q1795.2 198.3 1797.0 205.1 L1823.1 305.7 Q1824.8 312.5 1828.0 318.8 L1828.1 318.9 Q1831.2 325.2 1837.5 328.3 L1837.6 328.4 Q1843.9 331.5 1850.8 330.5 L1896.7 323.5" fill="none" stroke="#e6dfcd" stroke-width="6.8" stroke-linecap="round" stroke-linejoin="round"/><path d="M1856.6 132.8 L1869.6 183.1 Q1871.4 189.9 1872.7 196.7 L1895.4 316.2 Q1896.7 323.1 1898.2 329.9 L1903.7 355.2 Q1905.2 362.0 1907.3 368.7 L1922.1 417.0" fill="none" stroke="#e6dfcd" stroke-width="6.8" stroke-linecap="round" stroke-linejoin="round"/><path d="M1872.4 190.9 L1922.1 178.9" fill="none" stroke="#e6dfcd" stroke-width="6.8" stroke-linecap="round" stroke-linejoin="round"/><path d="M711.9 412.4 L778.0 397.9 Q784.8 396.4 791.7 394.8 L864.4 377.8" fill="none" stroke="#e6dfcd" stroke-width="6.8" stroke-linecap="round" stroke-linejoin="round"/><path d="M784.8 397.4 L795.6 438.6 Q797.3 445.3 799.1 452.1 L802.2 463.6 Q804.0 470.3 804.3 477.3 L804.9 488.3 Q805.2 495.3 806.6 502.2 L810.5 521.8 Q811.9 528.7 813.5 535.5 L822.8 576.0 Q824.4 582.8 826.0 586.0 L826.0 586.0 Q827.5 589.2 830.8 595.4 L834.1 601.7 Q837.3 607.9 838.3 614.8 L839.0 619.7 Q840.0 626.7 843.0 633.0 L848.6 645.3 Q851.5 651.7 855.2 657.6 L868.2 678.8" fill="none" stroke="#e6dfcd" stroke-width="6.8" stroke-linecap="round" stroke-linejoin="round"/><path d="M883.2 447.4 L973.8 427.1 Q980.7 425.5 987.5 424.0 L1067.1 406.2" fill="none" stroke="#e6dfcd" stroke-width="6.8" stroke-linecap="round" stroke-linejoin="round"/><path d="M1087.3 395.3 L1109.3 390.2 Q1116.1 388.7 1123.0 387.4 L1196.7 373.7 Q1203.6 372.4 1210.4 370.8 L1232.2 365.7 Q1239.0 364.1 1246.0 364.0 L1261.2 363.8 Q1268.2 363.7 1272.3 367.0 L1272.3 367.0 Q1276.5 370.3 1278.6 376.6 L1278.6 376.6 Q1280.7 382.8 1282.3 389.7 L1293.7 438.5 Q1295.2 445.3 1296.6 452.2 L1318.9 563.5 Q1320.2 570.3 1322.8 576.9 L1327.5 589.1" fill="none" stroke="#e6dfcd" stroke-width="6.8" stroke-linecap="round" stroke-linejoin="round"/><path d="M980.7 426.6 L1010.9 567.2" fill="none" stroke="#e6dfcd" stroke-width="6.8" stroke-linecap="round" stroke-linejoin="round"/><path d="M1067.1 406.2 L1087.3 488.5 Q1089.0 495.3 1090.6 502.2 L1096.2 526.0 Q1097.8 532.8 1097.0 539.1 L1097.0 539.1 Q1096.3 545.3 1091.6 549.0 L1091.6 549.0 Q1086.9 552.6 1080.2 554.5 L1074.9 556.0 Q1068.2 557.8 1061.3 559.1 L1018.8 567.0 Q1011.9 568.2 1007.2 573.5 L994.2 588.0" fill="none" stroke="#e6dfcd" stroke-width="6.8" stroke-linecap="round" stroke-linejoin="round"/><path d="M824.4 583.2 L897.1 569.2 Q904.0 567.8 910.9 566.5 L957.1 557.1 Q964.0 555.8 970.2 556.8 L970.2 556.8 Q976.5 557.8 980.7 563.0 L980.7 563.0 Q984.8 568.2 988.0 574.5 L990.0 578.7 Q993.2 585.0 994.6 591.8 L1004.2 636.5 Q1005.7 643.3 1007.5 650.1 L1023.4 710.0" fill="none" stroke="#e6dfcd" stroke-width="6.8" stroke-linecap="round" stroke-linejoin="round"/><path d="M791.1 595.8 L828.6 587.1" fill="none" stroke="#e6dfcd" stroke-width="6.8" stroke-linecap="round" stroke-linejoin="round"/><path d="M856.7 689.6 L863.0 683.9 Q868.2 679.2 874.8 677.1 L894.8 670.8 Q901.5 668.8 908.5 668.3 L915.4 667.8 Q922.3 667.3 928.6 670.4 L928.6 670.4 Q934.8 673.5 938.2 679.3 L938.2 679.3 Q941.5 685.0 942.8 691.9 L946.3 710.0" fill="none" stroke="#e6dfcd" stroke-width="6.8" stroke-linecap="round" stroke-linejoin="round"/><path d="M700.0 459.0 L756.3 554.0 Q759.8 560.0 763.8 565.8 L864.0 712.1" fill="none" stroke="#e6dfcd" stroke-width="12.6" stroke-linecap="round" stroke-linejoin="round"/><path d="M711.9 694.4 L801.5 637.5" fill="none" stroke="#e6dfcd" stroke-width="6.1" stroke-linecap="round" stroke-linejoin="round"/><path d="M718.2 693.3 L726.5 710.0" fill="none" stroke="#e6dfcd" stroke-width="6.1" stroke-linecap="round" stroke-linejoin="round"/><path d="M747.3 676.7 L764.0 710.0" fill="none" stroke="#e6dfcd" stroke-width="6.1" stroke-linecap="round" stroke-linejoin="round"/><path d="M775.5 657.9 L803.6 710.0" fill="none" stroke="#e6dfcd" stroke-width="6.1" stroke-linecap="round" stroke-linejoin="round"/><path d="M1276.5 583.2 L1315.5 574.4 Q1322.3 572.8 1322.3 572.7 L1322.3 572.7 Q1322.3 572.5 1325.5 578.5 L1325.5 578.5 Q1328.6 584.6 1335.5 583.3 L1387.3 573.5" fill="none" stroke="#e6dfcd" stroke-width="6.8" stroke-linecap="round" stroke-linejoin="round"/><path d="M1111.9 622.1 L1198.8 604.1 Q1205.7 602.7 1212.4 601.0 L1322.3 572.5" fill="none" stroke="#e6dfcd" stroke-width="6.8" stroke-linecap="round" stroke-linejoin="round"/><path d="M1120.2 622.5 L1140.0 710.0" fill="none" stroke="#e6dfcd" stroke-width="6.8" stroke-linecap="round" stroke-linejoin="round"/><path d="M1205.7 603.8 L1219.2 710.0" fill="none" stroke="#e6dfcd" stroke-width="6.8" stroke-linecap="round" stroke-linejoin="round"/><path d="M1328.6 584.6 L1333.4 607.3 Q1334.8 614.2 1336.0 621.1 L1350.5 710.0" fill="none" stroke="#e6dfcd" stroke-width="6.8" stroke-linecap="round" stroke-linejoin="round"/><path d="M1334.8 614.2 L1394.6 602.0 Q1401.5 600.6 1406.9 602.0 L1412.3 603.3" fill="none" stroke="#e6dfcd" stroke-width="6.8" stroke-linecap="round" stroke-linejoin="round"/><path d="M1066.1 632.9 L1116.1 620.0" fill="none" stroke="#e6dfcd" stroke-width="6.8" stroke-linecap="round" stroke-linejoin="round"/><path d="M1081.7 693.3 L1066.1 632.9" fill="none" stroke="#e6dfcd" stroke-width="6.8" stroke-linecap="round" stroke-linejoin="round"/><path d="M1639.8 470.9 L1660.2 545.6 Q1662.0 552.3 1662.6 559.3 L1664.6 583.7 Q1665.2 590.7 1666.9 597.4 L1671.9 616.7 Q1673.7 623.4 1677.4 628.7 L1677.4 628.7 Q1681.1 634.0 1686.3 635.3 L1686.3 635.3 Q1691.6 636.5 1698.4 634.9 L1888.3 588.5" fill="none" stroke="#e6dfcd" stroke-width="6.8" stroke-linecap="round" stroke-linejoin="round"/><path d="M1572.2 513.2 L1590.8 581.5 Q1592.7 588.3 1594.6 595.0 L1595.6 598.7 Q1597.5 605.5 1604.4 604.0 L1665.2 590.7" fill="none" stroke="#e6dfcd" stroke-width="6.8" stroke-linecap="round" stroke-linejoin="round"/><path d="M1662.0 553.4 L1692.7 546.0" fill="none" stroke="#e6dfcd" stroke-width="6.8" stroke-linecap="round" stroke-linejoin="round"/><path d="M1854.5 510.4 L1922.1 498.0" fill="none" stroke="#e6dfcd" stroke-width="6.8" stroke-linecap="round" stroke-linejoin="round"/><path d="M1870.3 510.0 L1887.1 581.4 Q1888.7 588.3 1888.5 588.4 L1888.5 588.4 Q1888.3 588.5 1889.9 595.4 L1916.8 710.1" fill="none" stroke="#e6dfcd" stroke-width="6.8" stroke-linecap="round" stroke-linejoin="round"/><path d="M809.6 117.0 L861.8 355.4 Q863.3 362.2 864.6 369.1 L873.1 413.1 Q874.4 420.0 876.4 426.7 L880.7 440.7 Q882.8 447.4 884.0 454.3 L904.0 568.2" fill="none" stroke="#fff" stroke-width="5.2" stroke-linecap="round" stroke-linejoin="round"/><path d="M902.5 186.0 L910.4 221.8 Q911.9 228.7 913.4 235.5 L917.7 255.2 Q919.2 262.0 919.9 269.0 L922.7 296.7 Q923.4 303.7 923.6 310.7 L924.4 333.9" fill="none" stroke="#fff" stroke-width="5.2" stroke-linecap="round" stroke-linejoin="round"/><path d="M855.5 325.5 L915.4 333.9 Q922.3 334.9 929.3 335.5 L977.9 339.5 Q984.8 340.1 991.8 339.8 L1019.5 338.4 Q1026.5 338.0 1033.3 336.4 L1052.5 331.8" fill="none" stroke="#fff" stroke-width="5.2" stroke-linecap="round" stroke-linejoin="round"/><path d="M949.4 132.8 L960.6 192.6 Q961.9 199.5 963.1 206.4 L972.2 257.2 Q973.4 264.1 975.5 269.3 L975.5 269.3 Q977.5 274.5 982.2 276.6 L982.2 276.6 Q986.9 278.7 993.8 277.7 L1023.7 273.4 Q1030.7 272.4 1037.5 271.0 L1107.2 256.2 Q1114.0 254.7 1120.8 252.9 L1206.7 229.7" fill="none" stroke="#fff" stroke-width="5.2" stroke-linecap="round" stroke-linejoin="round"/><path d="M953.6 148.5 L1041.1 136.0" fill="none" stroke="#fff" stroke-width="5.2" stroke-linecap="round" stroke-linejoin="round"/><path d="M967.1 207.8 L989.0 204.1" fill="none" stroke="#fff" stroke-width="5.2" stroke-linecap="round" stroke-linejoin="round"/><path d="M1030.7 272.4 L1042.8 332.8" fill="none" stroke="#fff" stroke-width="5.2" stroke-linecap="round" stroke-linejoin="round"/><path d="M750.5 298.5 L760.2 297.2 Q767.1 296.4 771.8 300.0 L771.8 300.0 Q776.5 303.7 778.6 309.9 L778.6 309.9 Q780.7 316.2 782.7 322.9 L792.2 355.3 Q794.2 362.0 796.2 368.7 L801.5 387.0" fill="none" stroke="#fff" stroke-width="5.2" stroke-linecap="round" stroke-linejoin="round"/><path d="M795.6 352.8 L858.0 341.3" fill="none" stroke="#fff" stroke-width="5.2" stroke-linecap="round" stroke-linejoin="round"/><path d="M1191.1 132.8 L1204.6 217.6 Q1205.7 224.5 1207.2 231.3 L1236.9 362.0" fill="none" stroke="#fff" stroke-width="5.2" stroke-linecap="round" stroke-linejoin="round"/><path d="M1213.0 134.9 L1218.2 162.0" fill="none" stroke="#fff" stroke-width="5.2" stroke-linecap="round" stroke-linejoin="round"/><path d="M1144.2 170.3 L1193.6 158.9" fill="none" stroke="#fff" stroke-width="5.2" stroke-linecap="round" stroke-linejoin="round"/><path d="M1270.2 132.8 L1304.1 218.0 Q1306.7 224.5 1308.2 231.3 L1335.4 355.2 Q1336.9 362.0 1338.6 368.8 L1383.2 553.1 Q1384.8 559.9 1388.0 566.2 L1390.0 570.3 Q1393.2 576.6 1390.0 574.5 L1390.0 574.5 Q1386.9 572.5 1390.8 578.3 L1395.5 585.4 Q1399.4 591.2 1404.8 595.7 L1406.5 597.2 Q1411.9 601.7 1413.5 608.5 L1416.6 621.9 Q1418.2 628.8 1419.3 635.7 L1431.7 710.0" fill="none" stroke="#fff" stroke-width="5.2" stroke-linecap="round" stroke-linejoin="round"/><path d="M1574.3 132.8 L1597.5 236.0" fill="none" stroke="#fff" stroke-width="5.2" stroke-linecap="round" stroke-linejoin="round"/><path d="M1587.0 168.7 L1602.4 166.2" fill="none" stroke="#fff" stroke-width="5.2" stroke-linecap="round" stroke-linejoin="round"/><path d="M1576.4 289.3 L1568.0 253.8 Q1566.4 247.0 1566.9 244.8 L1566.9 244.8 Q1567.3 242.7 1569.7 241.7 L1569.7 241.7 Q1572.2 240.6 1579.1 239.5 L1590.6 237.5 Q1597.5 236.4 1604.4 235.1 L1794.2 198.7" fill="none" stroke="#fff" stroke-width="5.2" stroke-linecap="round" stroke-linejoin="round"/><path d="M1778.3 132.8 L1780.9 142.9 Q1782.6 149.7 1784.3 156.5 L1793.5 191.6 Q1795.2 198.3 1797.0 205.1 L1823.1 305.7 Q1824.8 312.5 1828.0 318.8 L1828.1 318.9 Q1831.2 325.2 1837.5 328.3 L1837.6 328.4 Q1843.9 331.5 1850.8 330.5 L1896.7 323.5" fill="none" stroke="#fff" stroke-width="5.2" stroke-linecap="round" stroke-linejoin="round"/><path d="M1856.6 132.8 L1869.6 183.1 Q1871.4 189.9 1872.7 196.7 L1895.4 316.2 Q1896.7 323.1 1898.2 329.9 L1903.7 355.2 Q1905.2 362.0 1907.3 368.7 L1922.1 417.0" fill="none" stroke="#fff" stroke-width="5.2" stroke-linecap="round" stroke-linejoin="round"/><path d="M1872.4 190.9 L1922.1 178.9" fill="none" stroke="#fff" stroke-width="5.2" stroke-linecap="round" stroke-linejoin="round"/><path d="M711.9 412.4 L778.0 397.9 Q784.8 396.4 791.7 394.8 L864.4 377.8" fill="none" stroke="#fff" stroke-width="5.2" stroke-linecap="round" stroke-linejoin="round"/><path d="M784.8 397.4 L795.6 438.6 Q797.3 445.3 799.1 452.1 L802.2 463.6 Q804.0 470.3 804.3 477.3 L804.9 488.3 Q805.2 495.3 806.6 502.2 L810.5 521.8 Q811.9 528.7 813.5 535.5 L822.8 576.0 Q824.4 582.8 826.0 586.0 L826.0 586.0 Q827.5 589.2 830.8 595.4 L834.1 601.7 Q837.3 607.9 838.3 614.8 L839.0 619.7 Q840.0 626.7 843.0 633.0 L848.6 645.3 Q851.5 651.7 855.2 657.6 L868.2 678.8" fill="none" stroke="#fff" stroke-width="5.2" stroke-linecap="round" stroke-linejoin="round"/><path d="M883.2 447.4 L973.8 427.1 Q980.7 425.5 987.5 424.0 L1067.1 406.2" fill="none" stroke="#fff" stroke-width="5.2" stroke-linecap="round" stroke-linejoin="round"/><path d="M1087.3 395.3 L1109.3 390.2 Q1116.1 388.7 1123.0 387.4 L1196.7 373.7 Q1203.6 372.4 1210.4 370.8 L1232.2 365.7 Q1239.0 364.1 1246.0 364.0 L1261.2 363.8 Q1268.2 363.7 1272.3 367.0 L1272.3 367.0 Q1276.5 370.3 1278.6 376.6 L1278.6 376.6 Q1280.7 382.8 1282.3 389.7 L1293.7 438.5 Q1295.2 445.3 1296.6 452.2 L1318.9 563.5 Q1320.2 570.3 1322.8 576.9 L1327.5 589.1" fill="none" stroke="#fff" stroke-width="5.2" stroke-linecap="round" stroke-linejoin="round"/><path d="M980.7 426.6 L1010.9 567.2" fill="none" stroke="#fff" stroke-width="5.2" stroke-linecap="round" stroke-linejoin="round"/><path d="M1067.1 406.2 L1087.3 488.5 Q1089.0 495.3 1090.6 502.2 L1096.2 526.0 Q1097.8 532.8 1097.0 539.1 L1097.0 539.1 Q1096.3 545.3 1091.6 549.0 L1091.6 549.0 Q1086.9 552.6 1080.2 554.5 L1074.9 556.0 Q1068.2 557.8 1061.3 559.1 L1018.8 567.0 Q1011.9 568.2 1007.2 573.5 L994.2 588.0" fill="none" stroke="#fff" stroke-width="5.2" stroke-linecap="round" stroke-linejoin="round"/><path d="M824.4 583.2 L897.1 569.2 Q904.0 567.8 910.9 566.5 L957.1 557.1 Q964.0 555.8 970.2 556.8 L970.2 556.8 Q976.5 557.8 980.7 563.0 L980.7 563.0 Q984.8 568.2 988.0 574.5 L990.0 578.7 Q993.2 585.0 994.6 591.8 L1004.2 636.5 Q1005.7 643.3 1007.5 650.1 L1023.4 710.0" fill="none" stroke="#fff" stroke-width="5.2" stroke-linecap="round" stroke-linejoin="round"/><path d="M791.1 595.8 L828.6 587.1" fill="none" stroke="#fff" stroke-width="5.2" stroke-linecap="round" stroke-linejoin="round"/><path d="M856.7 689.6 L863.0 683.9 Q868.2 679.2 874.8 677.1 L894.8 670.8 Q901.5 668.8 908.5 668.3 L915.4 667.8 Q922.3 667.3 928.6 670.4 L928.6 670.4 Q934.8 673.5 938.2 679.3 L938.2 679.3 Q941.5 685.0 942.8 691.9 L946.3 710.0" fill="none" stroke="#fff" stroke-width="5.2" stroke-linecap="round" stroke-linejoin="round"/><path d="M700.0 459.0 L756.3 554.0 Q759.8 560.0 763.8 565.8 L864.0 712.1" fill="none" stroke="#fff" stroke-width="11" stroke-linecap="round" stroke-linejoin="round"/><path d="M711.9 694.4 L801.5 637.5" fill="none" stroke="#fff" stroke-width="4.5" stroke-linecap="round" stroke-linejoin="round"/><path d="M718.2 693.3 L726.5 710.0" fill="none" stroke="#fff" stroke-width="4.5" stroke-linecap="round" stroke-linejoin="round"/><path d="M747.3 676.7 L764.0 710.0" fill="none" stroke="#fff" stroke-width="4.5" stroke-linecap="round" stroke-linejoin="round"/><path d="M775.5 657.9 L803.6 710.0" fill="none" stroke="#fff" stroke-width="4.5" stroke-linecap="round" stroke-linejoin="round"/><path d="M1276.5 583.2 L1315.5 574.4 Q1322.3 572.8 1322.3 572.7 L1322.3 572.7 Q1322.3 572.5 1325.5 578.5 L1325.5 578.5 Q1328.6 584.6 1335.5 583.3 L1387.3 573.5" fill="none" stroke="#fff" stroke-width="5.2" stroke-linecap="round" stroke-linejoin="round"/><path d="M1111.9 622.1 L1198.8 604.1 Q1205.7 602.7 1212.4 601.0 L1322.3 572.5" fill="none" stroke="#fff" stroke-width="5.2" stroke-linecap="round" stroke-linejoin="round"/><path d="M1120.2 622.5 L1140.0 710.0" fill="none" stroke="#fff" stroke-width="5.2" stroke-linecap="round" stroke-linejoin="round"/><path d="M1205.7 603.8 L1219.2 710.0" fill="none" stroke="#fff" stroke-width="5.2" stroke-linecap="round" stroke-linejoin="round"/><path d="M1328.6 584.6 L1333.4 607.3 Q1334.8 614.2 1336.0 621.1 L1350.5 710.0" fill="none" stroke="#fff" stroke-width="5.2" stroke-linecap="round" stroke-linejoin="round"/><path d="M1334.8 614.2 L1394.6 602.0 Q1401.5 600.6 1406.9 602.0 L1412.3 603.3" fill="none" stroke="#fff" stroke-width="5.2" stroke-linecap="round" stroke-linejoin="round"/><path d="M1066.1 632.9 L1116.1 620.0" fill="none" stroke="#fff" stroke-width="5.2" stroke-linecap="round" stroke-linejoin="round"/><path d="M1081.7 693.3 L1066.1 632.9" fill="none" stroke="#fff" stroke-width="5.2" stroke-linecap="round" stroke-linejoin="round"/><path d="M1639.8 470.9 L1660.2 545.6 Q1662.0 552.3 1662.6 559.3 L1664.6 583.7 Q1665.2 590.7 1666.9 597.4 L1671.9 616.7 Q1673.7 623.4 1677.4 628.7 L1677.4 628.7 Q1681.1 634.0 1686.3 635.3 L1686.3 635.3 Q1691.6 636.5 1698.4 634.9 L1888.3 588.5" fill="none" stroke="#fff" stroke-width="5.2" stroke-linecap="round" stroke-linejoin="round"/><path d="M1572.2 513.2 L1590.8 581.5 Q1592.7 588.3 1594.6 595.0 L1595.6 598.7 Q1597.5 605.5 1604.4 604.0 L1665.2 590.7" fill="none" stroke="#fff" stroke-width="5.2" stroke-linecap="round" stroke-linejoin="round"/><path d="M1662.0 553.4 L1692.7 546.0" fill="none" stroke="#fff" stroke-width="5.2" stroke-linecap="round" stroke-linejoin="round"/><path d="M1854.5 510.4 L1922.1 498.0" fill="none" stroke="#fff" stroke-width="5.2" stroke-linecap="round" stroke-linejoin="round"/><path d="M1870.3 510.0 L1887.1 581.4 Q1888.7 588.3 1888.5 588.4 L1888.5 588.4 Q1888.3 588.5 1889.9 595.4 L1916.8 710.1" fill="none" stroke="#fff" stroke-width="5.2" stroke-linecap="round" stroke-linejoin="round"/><polyline points="880.7,337.0 886.9,349.5 897.3,363.0 930.7,389.1 957.8,412.0 961.9,424.5" fill="none" stroke="#c8dbb0" stroke-width="2.1" stroke-linejoin="round" stroke-linecap="round" stroke-dasharray="0.1 4.5"/><polyline points="991.1,343.2 990.0,362.0 986.9,420.3" fill="none" stroke="#c8dbb0" stroke-width="2.1" stroke-linejoin="round" stroke-linecap="round" stroke-dasharray="0.1 4.5"/><polyline points="1330.7,136.0 1353.6,232.8 1358.8,247.4 1391.1,270.3 1415.0,362.0 1468.2,528.7 1477.5,588.0 1489.0,622.5 1506.7,710.0" fill="none" stroke="#c8dbb0" stroke-width="2.1" stroke-linejoin="round" stroke-linecap="round" stroke-dasharray="0.1 4.5"/><polyline points="1314.0,236.0 1353.6,233.2" fill="none" stroke="#c8dbb0" stroke-width="2.1" stroke-linejoin="round" stroke-linecap="round" stroke-dasharray="0.1 4.5"/><polyline points="1220.2,262.0 1307.8,242.2" fill="none" stroke="#c8dbb0" stroke-width="2.1" stroke-linejoin="round" stroke-linecap="round" stroke-dasharray="0.1 4.5"/><polyline points="1397.3,278.7 1514.0,259.9" fill="none" stroke="#c8dbb0" stroke-width="2.1" stroke-linejoin="round" stroke-linecap="round" stroke-dasharray="0.1 4.5"/><polyline points="1596.5,248.0 1607.0,306.2 1618.7,362.0 1626.1,404.3 1638.8,451.9 1843.9,507.9" fill="none" stroke="#c8dbb0" stroke-width="2.1" stroke-linejoin="round" stroke-linecap="round" stroke-dasharray="0.1 4.5"/><polyline points="1638.8,451.9 1630.3,468.8 1576.4,476.2" fill="none" stroke="#c8dbb0" stroke-width="2.1" stroke-linejoin="round" stroke-linecap="round" stroke-dasharray="0.1 4.5"/><polyline points="1907.3,334.7 1922.1,332.0" fill="none" stroke="#c8dbb0" stroke-width="2.1" stroke-linejoin="round" stroke-linecap="round" stroke-dasharray="0.1 4.5"/><polyline points="1068.2,403.7 1084.8,396.4" fill="none" stroke="#c8dbb0" stroke-width="2.1" stroke-linejoin="round" stroke-linecap="round" stroke-dasharray="0.1 4.5"/><polyline points="1022.3,572.4 1032.8,588.0 1064.0,628.8" fill="none" stroke="#c8dbb0" stroke-width="2.1" stroke-linejoin="round" stroke-linecap="round" stroke-dasharray="0.1 4.5"/><polyline points="1081.7,695.4 1088.0,710.0" fill="none" stroke="#c8dbb0" stroke-width="2.1" stroke-linejoin="round" stroke-linecap="round" stroke-dasharray="0.1 4.5"/><polyline points="1151.5,393.2 1164.0,459.9" fill="none" stroke="#c8dbb0" stroke-width="2.1" stroke-linejoin="round" stroke-linecap="round" stroke-dasharray="0.1 4.5"/><polyline points="1393.2,573.5 1426.5,576.7 1451.5,593.3 1464.0,604.8 1516.1,606.9" fill="none" stroke="#c8dbb0" stroke-width="2.1" stroke-linejoin="round" stroke-linecap="round" stroke-dasharray="0.1 4.5"/><polyline points="1512.9,606.5 1596.5,605.5" fill="none" stroke="#c8dbb0" stroke-width="2.1" stroke-linejoin="round" stroke-linecap="round" stroke-dasharray="0.1 4.5"/><polyline points="1840.7,603.3 1901.0,650.9" fill="none" stroke="#c8dbb0" stroke-width="2.1" stroke-linejoin="round" stroke-linecap="round" stroke-dasharray="0.1 4.5"/><polyline points="1730.7,681.6 1765.6,676.3 1776.2,712.3" fill="none" stroke="#c8dbb0" stroke-width="2.1" stroke-linejoin="round" stroke-linecap="round" stroke-dasharray="0.1 4.5"/><polygon points="759.6,109.9 786.9,109.9 784.6,132.9 757.3,132.9" fill="#d3ccb2" /><polygon points="786.9,109.9 827.5,307.8 825.2,330.8 784.6,132.9" fill="#d7d0b5" /><polygon points="827.5,307.8 803.6,314.1 801.3,337.1 825.2,330.8" fill="#d3ccb2" /><polygon points="803.6,314.1 759.6,109.9 757.3,132.9 801.3,337.1" fill="#d7d0b5" /><polygon points="759.6,109.9 786.9,109.9 827.5,307.8 803.6,314.1" fill="#ece5c8" /><polygon points="712.0,299.8 750.0,296.3 749.0,306.3 711.0,309.8" fill="#d3ccb2" /><polygon points="750.0,296.3 759.7,349.6 758.7,359.6 749.0,306.3" fill="#d7d0b5" /><polygon points="759.7,349.6 712.0,360.0 711.0,370.0 758.7,359.6" fill="#d3ccb2" /><polygon points="712.0,360.0 712.0,299.8 711.0,309.8 711.0,370.0" fill="#d7d0b5" /><polygon points="712.0,299.8 750.0,296.3 759.7,349.6 712.0,360.0" fill="#ece5c8" /><polygon points="712.0,380.3 741.5,371.5 741.1,375.5 711.6,384.3" fill="#d8d1b6" /><polygon points="741.5,371.5 780.0,363.1 779.6,367.1 741.1,375.5" fill="#d8d1b6" /><polygon points="780.0,363.1 782.0,374.0 781.6,378.0 779.6,367.1" fill="#d7d0b5" /><polygon points="782.0,374.0 712.0,396.5 711.6,400.5 781.6,378.0" fill="#d8d1b6" /><polygon points="712.0,396.5 712.0,380.3 711.6,384.3 711.6,400.5" fill="#d7d0b5" /><polygon points="712.0,380.3 741.5,371.5 780.0,363.1 782.0,374.0 712.0,396.5" fill="#ebe4c7" /><polygon points="988.0,202.6 1143.2,169.3 1139.8,203.3 984.6,236.6" fill="#d3ccb2" /><polygon points="1143.2,169.3 1148.4,193.3 1145.0,227.3 1139.8,203.3" fill="#d7d0b5" /><polygon points="1148.4,193.3 994.2,226.6 990.8,260.6 1145.0,227.3" fill="#d3ccb2" /><polygon points="994.2,226.6 988.0,202.6 984.6,236.6 990.8,260.6" fill="#d7d0b5" /><polygon points="988.0,202.6 1143.2,169.3 1148.4,193.3 994.2,226.6" fill="#ece5c8" /><polygon points="1222.5,109.9 1246.3,109.9 1243.9,133.9 1220.1,133.9" fill="#d3ccb2" /><polygon points="1246.3,109.9 1269.2,219.3 1266.8,243.3 1243.9,133.9" fill="#d7d0b5" /><polygon points="1269.2,219.3 1245.2,224.5 1242.8,248.5 1266.8,243.3" fill="#d3ccb2" /><polygon points="1245.2,224.5 1222.5,109.9 1220.1,133.9 1242.8,248.5" fill="#d7d0b5" /><polygon points="1222.5,109.9 1246.3,109.9 1269.2,219.3 1245.2,224.5" fill="#ece5c8" /><polygon points="1264.0,232.8 1289.0,227.6 1286.2,255.6 1261.2,260.8" fill="#d3ccb2" /><polygon points="1289.0,227.6 1359.8,542.2 1357.0,570.2 1286.2,255.6" fill="#d7d0b5" /><polygon points="1359.8,542.2 1338.0,547.4 1335.2,575.4 1357.0,570.2" fill="#d3ccb2" /><polygon points="1338.0,547.4 1264.0,232.8 1261.2,260.8 1335.2,575.4" fill="#d7d0b5" /><polygon points="1264.0,232.8 1289.0,227.6 1359.8,542.2 1338.0,547.4" fill="#ece5c8" /><polygon points="1053.3,318.3 1206.7,285.0 1203.2,320.0 1049.8,353.3" fill="#d3ccb2" /><polygon points="1206.7,285.0 1208.0,313.0 1204.5,348.0 1203.2,320.0" fill="#d7d0b5" /><polygon points="1208.0,313.0 1059.2,341.7 1055.7,376.7 1204.5,348.0" fill="#d3ccb2" /><polygon points="1059.2,341.7 1053.3,318.3 1049.8,353.3 1055.7,376.7" fill="#d7d0b5" /><polygon points="1053.3,318.3 1206.7,285.0 1208.0,313.0 1059.2,341.7" fill="#ece5c8" /><polygon points="1055.0,330.0 1207.0,297.0 1207.3,302.0 1055.8,335.0" fill="#f1ebd3" /><polygon points="1209.5,364.0 1243.0,358.5 1242.6,362.5 1209.1,368.0" fill="#c6c5cc" /><polygon points="1243.0,358.5 1246.5,386.0 1246.1,390.0 1242.6,362.5" fill="#c6c5cc" /><polygon points="1246.5,386.0 1213.0,392.0 1212.6,396.0 1246.1,390.0" fill="#c6c5cc" /><polygon points="1213.0,392.0 1209.5,364.0 1209.1,368.0 1212.6,396.0" fill="#c6c5cc" /><polygon points="1209.5,364.0 1243.0,358.5 1246.5,386.0 1213.0,392.0" fill="#dcdbe0" /><polygon points="1522.3,95.0 1558.5,95.0 1555.5,125.0 1519.3,125.0" fill="#d3ccb2" /><polygon points="1558.5,95.0 1566.9,166.6 1563.9,196.6 1555.5,125.0" fill="#d7d0b5" /><polygon points="1566.9,166.6 1543.6,171.9 1540.6,201.9 1563.9,196.6" fill="#d3ccb2" /><polygon points="1543.6,171.9 1522.3,95.0 1519.3,125.0 1540.6,201.9" fill="#d7d0b5" /><polygon points="1522.3,95.0 1558.5,95.0 1566.9,166.6 1543.6,171.9" fill="#ece5c8" /><polygon points="1601.8,147.2 1607.0,175.4 1607.0,217.8 1601.8,190.0" fill="#d7d0b5" /><polygon points="1607.0,175.4 1776.3,143.2 1776.3,183.4 1607.0,217.8" fill="#d3ccb2" /><polygon points="1601.8,147.2 1775.8,138.6 1776.3,143.2 1607.0,175.4" fill="#ece5c8" /><polygon points="1605.0,163.0 1776.0,139.5 1776.0,142.0 1606.0,168.5" fill="#f1ebd3" /><polygon points="1818.1,97.0 1835.4,97.0 1832.4,129.0 1815.1,129.0" fill="#d3ccb2" /><polygon points="1835.4,97.0 1869.3,256.5 1866.3,288.5 1832.4,129.0" fill="#d7d0b5" /><polygon points="1869.3,256.5 1845.6,261.8 1842.6,293.8 1866.3,288.5" fill="#d3ccb2" /><polygon points="1845.6,261.8 1818.1,97.0 1815.1,129.0 1842.6,293.8" fill="#d7d0b5" /><polygon points="1818.1,97.0 1835.4,97.0 1869.3,256.5 1845.6,261.8" fill="#ece5c8" /><polygon points="1572.2,249.1 1593.3,248.0 1592.8,253.0 1571.7,254.1" fill="#c6c5cc" /><polygon points="1593.3,248.0 1593.9,266.4 1593.4,271.4 1592.8,253.0" fill="#c6c5cc" /><polygon points="1593.9,266.4 1581.7,267.7 1581.2,272.7 1593.4,271.4" fill="#c6c5cc" /><polygon points="1581.7,267.7 1580.6,261.8 1580.1,266.8 1581.2,272.7" fill="#c6c5cc" /><polygon points="1580.6,261.8 1572.2,262.2 1571.7,267.2 1580.1,266.8" fill="#c6c5cc" /><polygon points="1572.2,262.2 1572.2,249.1 1571.7,254.1 1571.7,267.2" fill="#c6c5cc" /><polygon points="1572.2,249.1 1593.3,248.0 1593.9,266.4 1581.7,267.7 1580.6,261.8 1572.2,262.2" fill="#dcdbe0" /><polygon points="1466.3,339.9 1569.6,318.9 1568.8,326.9 1465.5,347.9" fill="#d3ccb2" /><polygon points="1569.6,318.9 1572.8,343.0 1572.0,351.0 1568.8,326.9" fill="#d7d0b5" /><polygon points="1572.8,343.0 1469.5,364.0 1468.7,372.0 1572.0,351.0" fill="#d3ccb2" /><polygon points="1469.5,364.0 1466.3,339.9 1465.5,347.9 1468.7,372.0" fill="#d7d0b5" /><polygon points="1466.3,339.9 1569.6,318.9 1572.8,343.0 1469.5,364.0" fill="#ece5c8" /><polygon points="1514.7,352.8 1526.0,351.2 1525.4,357.2 1514.1,358.8" fill="#d3ccb2" /><polygon points="1526.0,351.2 1532.5,388.0 1531.9,394.0 1525.4,357.2" fill="#d7d0b5" /><polygon points="1532.5,388.0 1521.2,391.0 1520.6,397.0 1531.9,394.0" fill="#d3ccb2" /><polygon points="1521.2,391.0 1514.7,352.8 1514.1,358.8 1520.6,397.0" fill="#d7d0b5" /><polygon points="1514.7,352.8 1526.0,351.2 1532.5,388.0 1521.2,391.0" fill="#ece5c8" /><polygon points="1464.7,401.2 1595.4,372.6 1594.5,381.6 1463.8,410.2" fill="#d3ccb2" /><polygon points="1595.4,372.6 1598.6,404.3 1597.7,413.3 1594.5,381.6" fill="#d7d0b5" /><polygon points="1598.6,404.3 1468.0,434.0 1467.1,443.0 1597.7,413.3" fill="#d3ccb2" /><polygon points="1468.0,434.0 1464.7,401.2 1463.8,410.2 1467.1,443.0" fill="#d7d0b5" /><polygon points="1464.7,401.2 1595.4,372.6 1598.6,404.3 1468.0,434.0" fill="#ece5c8" /><polygon points="1674.6,339.9 1695.5,335.0 1694.9,341.0 1674.0,345.9" fill="#d3ccb2" /><polygon points="1695.5,335.0 1708.5,407.7 1707.9,413.7 1694.9,341.0" fill="#d7d0b5" /><polygon points="1708.5,407.7 1689.1,414.2 1688.5,420.2 1707.9,413.7" fill="#d3ccb2" /><polygon points="1689.1,414.2 1674.6,339.9 1674.0,345.9 1688.5,420.2" fill="#d7d0b5" /><polygon points="1674.6,339.9 1695.5,335.0 1708.5,407.7 1689.1,414.2" fill="#ece5c8" /><polygon points="1786.0,315.7 1807.0,310.8 1806.4,316.8 1785.4,321.7" fill="#d3ccb2" /><polygon points="1807.0,310.8 1821.5,380.0 1820.9,386.0 1806.4,316.8" fill="#d7d0b5" /><polygon points="1821.5,380.0 1800.5,386.0 1799.9,392.0 1820.9,386.0" fill="#d3ccb2" /><polygon points="1800.5,386.0 1786.0,315.7 1785.4,321.7 1799.9,392.0" fill="#d7d0b5" /><polygon points="1786.0,315.7 1807.0,310.8 1821.5,380.0 1800.5,386.0" fill="#ece5c8" /><polygon points="1698.8,352.8 1790.8,333.4 1790.2,339.4 1698.2,358.8" fill="#d3ccb2" /><polygon points="1790.8,333.4 1794.0,349.6 1793.4,355.6 1790.2,339.4" fill="#d7d0b5" /><polygon points="1794.0,349.6 1702.0,370.6 1701.4,376.6 1793.4,355.6" fill="#d3ccb2" /><polygon points="1702.0,370.6 1698.8,352.8 1698.2,358.8 1701.4,376.6" fill="#d7d0b5" /><polygon points="1698.8,352.8 1790.8,333.4 1794.0,349.6 1702.0,370.6" fill="#ece5c8" /><polygon points="1743.4,368.0 1757.2,366.0 1756.7,371.0 1742.9,373.0" fill="#d3ccb2" /><polygon points="1757.2,366.0 1763.5,393.7 1763.0,398.7 1756.7,371.0" fill="#d7d0b5" /><polygon points="1763.5,393.7 1746.6,396.9 1746.1,401.9 1763.0,398.7" fill="#d3ccb2" /><polygon points="1746.6,396.9 1743.4,368.0 1742.9,373.0 1746.1,401.9" fill="#d7d0b5" /><polygon points="1743.4,368.0 1757.2,366.0 1763.5,393.7 1746.6,396.9" fill="#ece5c8" /><polygon points="827.5,398.5 856.7,391.2 852.5,433.2 823.3,440.5" fill="#d3ccb2" /><polygon points="856.7,391.2 869.2,452.6 865.0,494.6 852.5,433.2" fill="#d7d0b5" /><polygon points="869.2,452.6 839.0,458.9 834.8,500.9 865.0,494.6" fill="#d3ccb2" /><polygon points="839.0,458.9 827.5,398.5 823.3,440.5 834.8,500.9" fill="#d7d0b5" /><polygon points="827.5,398.5 856.7,391.2 869.2,452.6 839.0,458.9" fill="#ece5c8" /><polygon points="824.4,461.0 854.6,455.8 850.6,495.8 820.4,501.0" fill="#d3ccb2" /><polygon points="854.6,455.8 866.1,515.1 862.1,555.1 850.6,495.8" fill="#d7d0b5" /><polygon points="866.1,515.1 838.0,521.4 834.0,561.4 862.1,555.1" fill="#d3ccb2" /><polygon points="838.0,521.4 824.4,461.0 820.4,501.0 834.0,561.4" fill="#d7d0b5" /><polygon points="824.4,461.0 854.6,455.8 866.1,515.1 838.0,521.4" fill="#ece5c8" /><polygon points="919.2,393.3 930.7,390.1 930.3,394.1 918.8,397.3" fill="#c6c5cc" /><polygon points="930.7,390.1 936.9,417.2 936.5,421.2 930.3,394.1" fill="#c6c5cc" /><polygon points="936.9,417.2 925.5,420.3 925.1,424.3 936.5,421.2" fill="#c6c5cc" /><polygon points="925.5,420.3 919.2,393.3 918.8,397.3 925.1,424.3" fill="#c6c5cc" /><polygon points="919.2,393.3 930.7,390.1 936.9,417.2 925.5,420.3" fill="#dcdbe0" /><polygon points="994.2,441.2 1028.6,433.9 1028.0,439.9 993.6,447.2" fill="#d3ccb2" /><polygon points="1028.6,433.9 1055.7,551.6 1055.1,557.6 1028.0,439.9" fill="#d7d0b5" /><polygon points="1055.7,551.6 1019.2,559.9 1018.6,565.9 1055.1,557.6" fill="#d3ccb2" /><polygon points="1019.2,559.9 994.2,441.2 993.6,447.2 1018.6,565.9" fill="#d7d0b5" /><polygon points="994.2,441.2 1028.6,433.9 1055.7,551.6 1019.2,559.9" fill="#ece5c8" /><polygon points="1032.8,412.0 1057.8,406.8 1053.8,446.8 1028.8,452.0" fill="#d3ccb2" /><polygon points="1057.8,406.8 1071.3,490.1 1067.3,530.1 1053.8,446.8" fill="#d7d0b5" /><polygon points="1071.3,490.1 1047.3,495.3 1043.3,535.3 1067.3,530.1" fill="#d3ccb2" /><polygon points="1047.3,495.3 1032.8,412.0 1028.8,452.0 1043.3,535.3" fill="#d7d0b5" /><polygon points="1032.8,412.0 1057.8,406.8 1071.3,490.1 1047.3,495.3" fill="#ece5c8" /><polygon points="1171.3,461.0 1263.0,442.2 1261.6,456.2 1169.9,475.0" fill="#d3ccb2" /><polygon points="1263.0,442.2 1265.7,453.7 1264.3,467.7 1261.6,456.2" fill="#d7d0b5" /><polygon points="1265.7,453.7 1226.5,462.0 1225.1,476.0 1264.3,467.7" fill="#d3ccb2" /><polygon points="1226.5,462.0 1234.8,505.8 1233.4,519.8 1225.1,476.0" fill="#d7d0b5" /><polygon points="1234.8,505.8 1218.2,508.9 1216.8,522.9 1233.4,519.8" fill="#d3ccb2" /><polygon points="1218.2,508.9 1211.9,465.1 1210.5,479.1 1216.8,522.9" fill="#d7d0b5" /><polygon points="1211.9,465.1 1174.4,472.4 1173.0,486.4 1210.5,479.1" fill="#d3ccb2" /><polygon points="1174.4,472.4 1171.3,461.0 1169.9,475.0 1173.0,486.4" fill="#d7d0b5" /><polygon points="1171.3,461.0 1263.0,442.2 1265.7,453.7 1226.5,462.0 1234.8,505.8 1218.2,508.9 1211.9,465.1 1174.4,472.4" fill="#ece5c8" /><polygon points="860.9,592.3 963.0,568.3 962.4,574.3 860.3,598.3" fill="#d3ccb2" /><polygon points="963.0,568.3 966.0,613.1 965.4,619.1 962.4,574.3" fill="#d7d0b5" /><polygon points="966.0,613.1 869.2,639.2 868.6,645.2 965.4,619.1" fill="#d3ccb2" /><polygon points="869.2,639.2 860.9,592.3 860.3,598.3 868.6,645.2" fill="#d7d0b5" /><polygon points="860.9,592.3 963.0,568.3 966.0,613.1 869.2,639.2" fill="#ece5c8" /><polygon points="966.0,591.3 992.0,587.0 988.0,627.0 962.0,631.3" fill="#d3ccb2" /><polygon points="992.0,587.0 1005.7,651.7 1001.7,691.7 988.0,627.0" fill="#d7d0b5" /><polygon points="1005.7,651.7 977.5,652.7 973.5,692.7 1001.7,691.7" fill="#d3ccb2" /><polygon points="977.5,652.7 966.0,591.3 962.0,631.3 973.5,692.7" fill="#d7d0b5" /><polygon points="966.0,591.3 992.0,587.0 1005.7,651.7 977.5,652.7" fill="#ece5c8" /><polygon points="962.0,654.8 993.2,652.7 989.2,692.7 958.0,694.8" fill="#d3ccb2" /><polygon points="993.2,652.7 1004.0,712.0 1000.0,752.0 989.2,692.7" fill="#d7d0b5" /><polygon points="1004.0,712.0 968.0,712.0 964.0,752.0 1000.0,752.0" fill="#d3ccb2" /><polygon points="968.0,712.0 962.0,654.8 958.0,694.8 964.0,752.0" fill="#d7d0b5" /><polygon points="962.0,654.8 993.2,652.7 1004.0,712.0 968.0,712.0" fill="#ece5c8" /><polygon points="726.5,602.7 741.0,592.3 740.5,597.3 726.0,607.7" fill="#d3ccb2" /><polygon points="741.0,592.3 752.5,609.0 752.0,614.0 740.5,597.3" fill="#d7d0b5" /><polygon points="752.5,609.0 737.0,616.3 736.5,621.3 752.0,614.0" fill="#d3ccb2" /><polygon points="737.0,616.3 726.5,602.7 726.0,607.7 736.5,621.3" fill="#d7d0b5" /><polygon points="726.5,602.7 741.0,592.3 752.5,609.0 737.0,616.3" fill="#ece5c8" /><polygon points="1078.6,636.0 1103.6,629.8 1103.0,635.8 1078.0,642.0" fill="#d3ccb2" /><polygon points="1103.6,629.8 1108.8,671.5 1108.2,677.5 1103.0,635.8" fill="#d7d0b5" /><polygon points="1108.8,671.5 1087.0,676.7 1086.4,682.7 1108.2,677.5" fill="#d3ccb2" /><polygon points="1087.0,676.7 1078.6,636.0 1078.0,642.0 1086.4,682.7" fill="#d7d0b5" /><polygon points="1078.6,636.0 1103.6,629.8 1108.8,671.5 1087.0,676.7" fill="#ece5c8" /><polygon points="1156.7,591.3 1183.8,585.0 1179.8,625.0 1152.7,631.3" fill="#d3ccb2" /><polygon points="1183.8,585.0 1198.4,647.0 1194.4,687.0 1179.8,625.0" fill="#d7d0b5" /><polygon points="1198.4,647.0 1164.0,653.0 1160.0,693.0 1194.4,687.0" fill="#d3ccb2" /><polygon points="1164.0,653.0 1156.7,591.3 1152.7,631.3 1160.0,693.0" fill="#d7d0b5" /><polygon points="1156.7,591.3 1183.8,585.0 1198.4,647.0 1164.0,653.0" fill="#ece5c8" /><polygon points="1153.6,653.8 1182.8,647.5 1178.8,687.5 1149.6,693.8" fill="#d3ccb2" /><polygon points="1182.8,647.5 1197.0,712.0 1193.0,752.0 1178.8,687.5" fill="#d7d0b5" /><polygon points="1197.0,712.0 1162.0,712.0 1158.0,752.0 1193.0,752.0" fill="#d3ccb2" /><polygon points="1162.0,712.0 1153.6,653.8 1149.6,693.8 1158.0,752.0" fill="#d7d0b5" /><polygon points="1153.6,653.8 1182.8,647.5 1197.0,712.0 1162.0,712.0" fill="#ece5c8" /><polygon points="1289.0,635.0 1314.0,630.8 1313.5,635.8 1288.5,640.0" fill="#c6c5cc" /><polygon points="1314.0,630.8 1321.3,673.5 1320.8,678.5 1313.5,635.8" fill="#c6c5cc" /><polygon points="1321.3,673.5 1297.3,678.8 1296.8,683.8 1320.8,678.5" fill="#c6c5cc" /><polygon points="1297.3,678.8 1289.0,635.0 1288.5,640.0 1296.8,683.8" fill="#c6c5cc" /><polygon points="1289.0,635.0 1314.0,630.8 1321.3,673.5 1297.3,678.8" fill="#dcdbe0" /><polygon points="1367.1,582.9 1392.1,578.8 1388.3,616.8 1363.3,620.9" fill="#d3ccb2" /><polygon points="1392.1,578.8 1403.6,639.2 1399.8,677.2 1388.3,616.8" fill="#d7d0b5" /><polygon points="1403.6,639.2 1373.4,645.4 1369.6,683.4 1399.8,677.2" fill="#d3ccb2" /><polygon points="1373.4,645.4 1367.1,582.9 1363.3,620.9 1369.6,683.4" fill="#d7d0b5" /><polygon points="1367.1,582.9 1392.1,578.8 1403.6,639.2 1373.4,645.4" fill="#ece5c8" /><polygon points="1363.0,648.5 1392.1,642.3 1388.1,682.3 1359.0,688.5" fill="#d3ccb2" /><polygon points="1392.1,642.3 1405.0,712.0 1401.0,752.0 1388.1,682.3" fill="#d7d0b5" /><polygon points="1405.0,712.0 1371.0,712.0 1367.0,752.0 1401.0,752.0" fill="#d3ccb2" /><polygon points="1371.0,712.0 1363.0,648.5 1359.0,688.5 1367.0,752.0" fill="#d7d0b5" /><polygon points="1363.0,648.5 1392.1,642.3 1405.0,712.0 1371.0,712.0" fill="#ece5c8" /><polygon points="1599.6,463.5 1624.0,458.2 1620.8,490.2 1596.4,495.5" fill="#d3ccb2" /><polygon points="1624.0,458.2 1646.2,553.4 1643.0,585.4 1620.8,490.2" fill="#d7d0b5" /><polygon points="1646.2,553.4 1619.7,558.7 1616.5,590.7 1643.0,585.4" fill="#d3ccb2" /><polygon points="1619.7,558.7 1599.6,463.5 1596.4,495.5 1616.5,590.7" fill="#d7d0b5" /><polygon points="1599.6,463.5 1624.0,458.2 1646.2,553.4 1619.7,558.7" fill="#ece5c8" /><polygon points="1692.3,561.8 1857.0,526.2 1860.2,568.2 1849.0,577.9 1836.0,581.1 1823.0,571.5 1803.7,590.8 1787.6,581.1 1768.2,595.7 1752.0,587.6 1729.4,603.7 1710.0,608.6 1695.5,602.1" fill="#d3ccb2" /><polygon points="1697.0,560.8 1706.0,558.8 1706.0,597.0 1697.0,600.0" fill="#dad3b9" /><polygon points="1722.0,555.4 1731.0,553.4 1731.0,597.0 1722.0,600.0" fill="#dad3b9" /><polygon points="1745.0,550.4 1755.0,548.4 1755.0,582.0 1745.0,585.0" fill="#dad3b9" /><polygon points="1778.0,543.3 1789.0,541.3 1789.0,575.0 1778.0,578.0" fill="#dad3b9" /><polygon points="1812.0,535.9 1822.0,533.9 1822.0,565.0 1812.0,568.0" fill="#dad3b9" /><polygon points="1838.0,530.3 1847.0,528.3 1847.0,571.0 1838.0,574.0" fill="#dad3b9" /><polygon points="1690.7,540.8 1713.3,535.9 1711.7,527.9 1752.1,519.8 1753.7,526.2 1792.4,518.2 1790.8,510.1 1836.0,502.0 1837.6,508.5 1855.4,505.3 1857.0,526.2 1692.3,561.8" fill="#ece5c8" /><polygon points="1872.4,429.7 1898.9,425.4 1898.5,429.4 1872.0,433.7" fill="#c6c5cc" /><polygon points="1898.9,425.4 1904.2,450.8 1903.8,454.8 1898.5,429.4" fill="#c6c5cc" /><polygon points="1904.2,450.8 1877.7,457.2 1877.3,461.2 1903.8,454.8" fill="#c6c5cc" /><polygon points="1877.7,457.2 1872.4,429.7 1872.0,433.7 1877.3,461.2" fill="#c6c5cc" /><polygon points="1872.4,429.7 1898.9,425.4 1904.2,450.8 1877.7,457.2" fill="#dcdbe0" /><polygon points="1886.2,465.6 1906.3,461.4 1905.9,465.4 1885.8,469.6" fill="#c6c5cc" /><polygon points="1906.3,461.4 1912.6,493.1 1912.2,497.1 1905.9,465.4" fill="#c6c5cc" /><polygon points="1912.6,493.1 1892.5,497.3 1892.1,501.3 1912.2,497.1" fill="#c6c5cc" /><polygon points="1892.5,497.3 1886.2,465.6 1885.8,469.6 1892.1,501.3" fill="#c6c5cc" /><polygon points="1886.2,465.6 1906.3,461.4 1912.6,493.1 1892.5,497.3" fill="#dcdbe0" /><polygon points="1908.0,521.0 1930.0,516.0 1924.0,576.0 1902.0,581.0" fill="#d3ccb2" /><polygon points="1930.0,516.0 1960.0,720.0 1954.0,780.0 1924.0,576.0" fill="#d7d0b5" /><polygon points="1960.0,720.0 1945.0,720.0 1939.0,780.0 1954.0,780.0" fill="#d3ccb2" /><polygon points="1945.0,720.0 1908.0,521.0 1902.0,581.0 1939.0,780.0" fill="#d7d0b5" /><polygon points="1908.0,521.0 1930.0,516.0 1960.0,720.0 1945.0,720.0" fill="#ece5c8" /><polygon points="1708.5,654.1 1777.3,638.2 1776.9,642.2 1708.1,658.1" fill="#c6c5cc" /><polygon points="1777.3,638.2 1785.7,674.2 1785.3,678.2 1776.9,642.2" fill="#c6c5cc" /><polygon points="1785.7,674.2 1777.3,676.3 1776.9,680.3 1785.3,678.2" fill="#c6c5cc" /><polygon points="1777.3,676.3 1772.0,658.3 1771.6,662.3 1776.9,680.3" fill="#c6c5cc" /><polygon points="1772.0,658.3 1712.8,671.0 1712.4,675.0 1771.6,662.3" fill="#c6c5cc" /><polygon points="1712.8,671.0 1708.5,654.1 1708.1,658.1 1712.4,675.0" fill="#c6c5cc" /><polygon points="1708.5,654.1 1777.3,638.2 1785.7,674.2 1777.3,676.3 1772.0,658.3 1712.8,671.0" fill="#dcdbe0" /><polygon points="1542.5,691.1 1603.9,675.2 1603.6,678.2 1542.2,694.1" fill="#d3ccb2" /><polygon points="1603.9,675.2 1613.4,712.0 1613.1,715.0 1603.6,678.2" fill="#d7d0b5" /><polygon points="1613.4,712.0 1545.7,712.0 1545.4,715.0 1613.1,715.0" fill="#d3ccb2" /><polygon points="1545.7,712.0 1542.5,691.1 1542.2,694.1 1545.4,715.0" fill="#d7d0b5" /><polygon points="1542.5,691.1 1603.9,675.2 1613.4,712.0 1545.7,712.0" fill="#e9e3bd" /><polygon points="1714.9,671.0 1720.2,671.0 1719.9,674.0 1714.6,674.0" fill="#d3ccb2" /><polygon points="1720.2,671.0 1724.4,691.1 1724.1,694.1 1719.9,674.0" fill="#d7d0b5" /><polygon points="1724.4,691.1 1765.6,682.6 1765.3,685.6 1724.1,694.1" fill="#d3ccb2" /><polygon points="1765.6,682.6 1774.1,712.0 1773.8,715.0 1765.3,685.6" fill="#d7d0b5" /><polygon points="1774.1,712.0 1668.0,712.0 1667.7,715.0 1773.8,715.0" fill="#d3ccb2" /><polygon points="1668.0,712.0 1673.0,707.0 1672.7,710.0 1667.7,715.0" fill="#d3ccb2" /><polygon points="1673.0,707.0 1718.0,692.8 1717.7,695.8 1672.7,710.0" fill="#d3ccb2" /><polygon points="1718.0,692.8 1714.9,671.0 1714.6,674.0 1717.7,695.8" fill="#d7d0b5" /><polygon points="1714.9,671.0 1720.2,671.0 1724.4,691.1 1765.6,682.6 1774.1,712.0 1668.0,712.0 1673.0,707.0 1718.0,692.8" fill="#eee7c8" /><circle cx="1586" cy="706.500" r="7" fill="#fbf8ee"/><text x="1068.0" y="234.0" font-size="12.5" text-anchor="middle" font-family="Liberation Sans" fill="#73716b" stroke="#f7f1dc" stroke-width="2.5" stroke-linejoin="round" paint-order="stroke" opacity="0.95" >15к5</text><text x="1131.0" y="348.0" font-size="12.5" text-anchor="middle" font-family="Liberation Sans" fill="#73716b" stroke="#f7f1dc" stroke-width="2.5" stroke-linejoin="round" paint-order="stroke" opacity="0.95" >15к4</text><text x="1311.5" y="412.0" font-size="12.5" text-anchor="middle" font-family="Liberation Sans" fill="#73716b" stroke="#f7f1dc" stroke-width="2.5" stroke-linejoin="round" paint-order="stroke" opacity="0.95" >15к3</text><text x="1689.0" y="185.0" font-size="12.5" text-anchor="middle" font-family="Liberation Sans" fill="#73716b" stroke="#f7f1dc" stroke-width="2.5" stroke-linejoin="round" paint-order="stroke" opacity="0.95" >9к7</text><text x="1843.5" y="231.5" font-size="12.5" text-anchor="middle" font-family="Liberation Sans" fill="#73716b" stroke="#f7f1dc" stroke-width="2.5" stroke-linejoin="round" paint-order="stroke" opacity="0.95" >9к2</text><text x="1541.5" y="143.5" font-size="12.5" text-anchor="middle" font-family="Liberation Sans" fill="#73716b" stroke="#f7f1dc" stroke-width="2.5" stroke-linejoin="round" paint-order="stroke" opacity="0.95" >9к8</text><text x="772.0" y="381.1" font-size="12.5" text-anchor="middle" font-family="Liberation Sans" fill="#73716b" stroke="#f7f1dc" stroke-width="2.5" stroke-linejoin="round" paint-order="stroke" opacity="0.95" >21с1</text><text x="729.5" y="394.0" font-size="12.5" text-anchor="middle" font-family="Liberation Sans" fill="#73716b" stroke="#f7f1dc" stroke-width="2.5" stroke-linejoin="round" paint-order="stroke" opacity="0.95" >21с2</text><text x="716.0" y="326.5" font-size="12.5" text-anchor="middle" font-family="Liberation Sans" fill="#73716b" stroke="#f7f1dc" stroke-width="2.5" stroke-linejoin="round" paint-order="stroke" opacity="0.95" >1</text><text x="844.2" y="494.6" font-size="12.5" text-anchor="middle" font-family="Liberation Sans" fill="#73716b" stroke="#f7f1dc" stroke-width="2.5" stroke-linejoin="round" paint-order="stroke" opacity="0.95" >23к1</text><text x="1057.8" y="499.8" font-size="12.5" text-anchor="middle" font-family="Liberation Sans" fill="#73716b" stroke="#f7f1dc" stroke-width="2.5" stroke-linejoin="round" paint-order="stroke" opacity="0.95" >25к1</text><circle cx="1023.8" cy="497.8" r="11.500" fill="#f6f1e4"/><path d="M1016.3 492.3h2.500l1 2.500h10.500l-1.800 5.500h-8z" fill="#6b4a3a"/><circle cx="1021.3" cy="503.3" r="1.300" fill="#6b4a3a"/><circle cx="1027.3" cy="503.3" r="1.300" fill="#6b4a3a"/><text x="1024.4" y="523.1" font-size="14.6" text-anchor="middle" font-family="Liberation Sans" fill="#5c5a56" stroke="#f7f1dc" stroke-width="2.5" stroke-linejoin="round" paint-order="stroke" opacity="0.95" >Перекресток</text><circle cx="910.9" cy="611.7" r="11.500" fill="#f6f1e4"/><path d="M903.4 606.2h2.500l1 2.500h10.500l-1.800 5.500h-8z" fill="#6b4a3a"/><circle cx="908.4" cy="617.2" r="1.300" fill="#6b4a3a"/><circle cx="914.4" cy="617.2" r="1.300" fill="#6b4a3a"/><text x="910.9" y="638.2" font-size="14.6" text-anchor="middle" font-family="Liberation Sans" fill="#5c5a56" stroke="#f7f1dc" stroke-width="2.5" stroke-linejoin="round" paint-order="stroke" opacity="0.95" >Пятёрочка</text><text x="741.0" y="614.1" font-size="12.5" text-anchor="middle" font-family="Liberation Sans" fill="#73716b" stroke="#f7f1dc" stroke-width="2.5" stroke-linejoin="round" paint-order="stroke" opacity="0.95" >6</text><text x="1095.0" y="662.5" font-size="12.5" text-anchor="middle" font-family="Liberation Sans" fill="#73716b" stroke="#f7f1dc" stroke-width="2.5" stroke-linejoin="round" paint-order="stroke" opacity="0.95" >29к3с1</text><text x="1179.0" y="654.1" font-size="12.5" text-anchor="middle" font-family="Liberation Sans" fill="#73716b" stroke="#f7f1dc" stroke-width="2.5" stroke-linejoin="round" paint-order="stroke" opacity="0.95" >29к3</text><text x="1301.5" y="661.4" font-size="12.5" text-anchor="middle" font-family="Liberation Sans" fill="#73716b" stroke="#f7f1dc" stroke-width="2.5" stroke-linejoin="round" paint-order="stroke" opacity="0.95" >29к4с1</text><text x="1378.6" y="710.0" font-size="12.5" text-anchor="middle" font-family="Liberation Sans" fill="#73716b" stroke="#f7f1dc" stroke-width="2.5" stroke-linejoin="round" paint-order="stroke" opacity="0.95" >29к4</text><text x="1529.9" y="414.7" font-size="12.5" text-anchor="middle" font-family="Liberation Sans" fill="#73716b" stroke="#f7f1dc" stroke-width="2.5" stroke-linejoin="round" paint-order="stroke" opacity="0.95" >13к4</text><circle cx="1569.4" cy="406.8" r="11.500" fill="#f6f1e4"/><circle cx="1566.2" cy="400.0" r="1.800" fill="#6b4a3a"/><path d="M1563.4 402.3h5.600v6h-1v5.500h-1.500v-5h-0.600v5h-1.500v-5.500h-1z" fill="#6b4a3a"/><circle cx="1573.6" cy="403.5" r="1.400" fill="#6b4a3a"/><path d="M1571.5 405.3h4.200v4.500h-0.800v4h-1.100v-3.500h-0.400v3.500h-1.100v-4h-0.800z" fill="#6b4a3a"/><text x="1570.0" y="431.8" font-size="14.6" text-anchor="middle" font-family="Liberation Sans" fill="#5c5a56" stroke="#f7f1dc" stroke-width="2.5" stroke-linejoin="round" paint-order="stroke" opacity="0.95" >Гимназия №</text><text x="1570.0" y="448.1" font-size="14.6" text-anchor="middle" font-family="Liberation Sans" fill="#5c5a56" stroke="#f7f1dc" stroke-width="2.5" stroke-linejoin="round" paint-order="stroke" opacity="0.95" >1532, подр. № 4</text><circle cx="1748.3" cy="366.2" r="11.500" fill="#f6f1e4"/><rect x="1741.8" y="363.2" width="9" height="9" fill="none" stroke="#6b4a3a" stroke-width="1.800"/><path d="M1741.8 363.2l3-3h9v9l-3 3" fill="none" stroke="#6b4a3a" stroke-width="1.800"/><text x="1746.3" y="370.4" font-size="7" font-weight="bold" text-anchor="middle" fill="#6b4a3a" font-family="Liberation Sans">A</text><text x="1748.3" y="390.6" font-size="14.6" text-anchor="middle" font-family="Liberation Sans" fill="#5c5a56" stroke="#f7f1dc" stroke-width="2.5" stroke-linejoin="round" paint-order="stroke" opacity="0.95" >Гимназия № 1532,</text><text x="1748.3" y="407.1" font-size="14.6" text-anchor="middle" font-family="Liberation Sans" fill="#5c5a56" stroke="#f7f1dc" stroke-width="2.5" stroke-linejoin="round" paint-order="stroke" opacity="0.95" >подр. № 05/3</text><circle cx="1213.0" cy="486.0" r="11.500" fill="#f6f1e4"/><rect x="1206.5" y="483.0" width="9" height="9" fill="none" stroke="#6b4a3a" stroke-width="1.800"/><path d="M1206.5 483.0l3-3h9v9l-3 3" fill="none" stroke="#6b4a3a" stroke-width="1.800"/><text x="1211.0" y="490.2" font-size="7" font-weight="bold" text-anchor="middle" fill="#6b4a3a" font-family="Liberation Sans">A</text><text x="1210.0" y="509.8" font-size="14.6" text-anchor="middle" font-family="Liberation Sans" fill="#5c5a56" stroke="#f7f1dc" stroke-width="2.5" stroke-linejoin="round" paint-order="stroke" opacity="0.95" >Гимназия № 1532,</text><text x="1210.0" y="525.8" font-size="14.6" text-anchor="middle" font-family="Liberation Sans" fill="#5c5a56" stroke="#f7f1dc" stroke-width="2.5" stroke-linejoin="round" paint-order="stroke" opacity="0.95" >дошкольное отделение</text><text x="1888.7" y="446.4" font-size="12.5" text-anchor="middle" font-family="Liberation Sans" fill="#73716b" stroke="#f7f1dc" stroke-width="2.5" stroke-linejoin="round" paint-order="stroke" opacity="0.95" >9к3с1</text><text x="1630.3" y="553.6" font-size="12.5" text-anchor="middle" font-family="Liberation Sans" fill="#73716b" stroke="#f7f1dc" stroke-width="2.5" stroke-linejoin="round" paint-order="stroke" opacity="0.95" >9к6</text><text x="1775.2" y="573.3" font-size="12.5" text-anchor="middle" font-family="Liberation Sans" fill="#73716b" stroke="#f7f1dc" stroke-width="2.5" stroke-linejoin="round" paint-order="stroke" opacity="0.95" >9к5</text><text x="1739.2" y="662.8" font-size="12.5" text-anchor="middle" font-family="Liberation Sans" fill="#73716b" stroke="#f7f1dc" stroke-width="2.5" stroke-linejoin="round" paint-order="stroke" opacity="0.95" >9к4с1</text><text x="1250.0" y="386.0" font-size="12.5" text-anchor="middle" font-family="Liberation Sans" fill="#73716b" stroke="#f7f1dc" stroke-width="2.5" stroke-linejoin="round" paint-order="stroke" opacity="0.95" >1</text><text transform="translate(793.5,620.5) rotate(54)" font-size="15.8" font-family="Liberation Sans" fill="#4a4a46" stroke="#fff" stroke-width="2.5" paint-order="stroke" letter-spacing="0.3">ул. Генерала Т</text><polyline points="1925.0,164.5 1405.7,287.0 1320.3,252.3 1231.7,265.5 1228.3,321.7 1205.0,368.3 1213.3,286.7 1251.7,415.0 1286.7,510.0" fill="none" stroke="#ff8761" stroke-width="6.2" stroke-linejoin="round" stroke-linecap="round" /><polyline points="1140.8,276.7 1128.3,249.7 1045.8,250.8 1138.3,368.3 1180.0,425.0 1250.0,546.0" fill="none" stroke="#ff8761" stroke-width="6.2" stroke-linejoin="round" stroke-linecap="round" /><polyline points="1140.8,276.7 1175.0,370.0 1200.0,430.0 1255.0,463.3" fill="none" stroke="#ff8761" stroke-width="6.2" stroke-linejoin="round" stroke-linecap="round" /><polyline points="1146.7,264.2 1111.7,370.0 1140.0,365.0 1210.0,368.3 1227.5,355.0 1211.7,410.0 1196.7,398.3 1226.7,390.0 1218.3,383.3 1213.3,443.3 1206.7,491.7" fill="none" stroke="#ff8761" stroke-width="6.2" stroke-linejoin="round" stroke-linecap="round" /><polyline points="1146.7,264.2 1145.0,368.3 1143.3,406.7 1163.3,423.3 1158.3,433.3 1210.0,530.0 1267.8,583.7" fill="none" stroke="#ff8761" stroke-width="6.2" stroke-linejoin="round" stroke-linecap="round" /><polyline points="1138.3,365.0 1196.7,398.3 1255.0,463.3" fill="none" stroke="#ff8761" stroke-width="6.2" stroke-linejoin="round" stroke-linecap="round" /><polyline points="1143.3,406.7 1165.0,408.3 1196.0,440.0 1236.0,490.0 1250.5,546.0" fill="none" stroke="#ff8761" stroke-width="6.2" stroke-linejoin="round" stroke-linecap="round" /><polyline points="1170.0,350.0 1173.3,380.0 1206.7,491.7 1235.2,490.0 1318.7,689.7 1363.6,706.0 1380.0,712.0" fill="none" stroke="#ff8761" stroke-width="6.2" stroke-linejoin="round" stroke-linecap="round" /><polyline points="1235.0,350.0 1260.0,450.0 1278.0,532.8 1312.6,569.5 1265.8,608.2 1250.5,546.0 1347.3,550.1 1267.8,575.6" fill="none" stroke="#ff8761" stroke-width="6.2" stroke-linejoin="round" stroke-linecap="round" /><polyline points="1227.5,355.0 1218.0,400.0 1237.0,468.0 1250.0,530.0" fill="none" stroke="#ff8761" stroke-width="6.2" stroke-linejoin="round" stroke-linecap="round" /><rect x="714" y="137" width="1206" height="1" fill="#e6f1f4"/></svg>
<div class="abs" style="left:724px;top:147px;width:29px;height:56px;background:rgba(255,255,255,0.4);border-radius:4px"></div>
<div class="abs" style="left:726px;top:149px;width:25px;height:25px;background:#7b98bf;border-radius:2px 2px 0 0"></div>
<div class="abs" style="left:726px;top:176px;width:25px;height:25px;background:#7b98bf;border-radius:0 0 2px 2px"></div>
<svg class="abs" style="left:726px;top:149px" width="25" height="52"><path d="M7.500 11.700h10M12.500 6.700v10M8.500 38.700h8" stroke="#fff" stroke-width="2.600"/></svg>
<div class="abs" style="left:1881px;top:666px;width:29px;height:29px;background:rgba(255,255,255,0.4);border-radius:4px"></div>
<div class="abs" style="left:1883px;top:668px;width:25px;height:25px;background:#7b98bf;border-radius:2px"></div>
<div class="t" style="left:1892.0px;top:670.3px;font-size:19px;line-height:23px;color:#fff;font-weight:bold;">i</div>
<div class="abs" style="left:0;top:718px;width:1920px;height:312px;background:#fff"></div>
<div class="t" style="left:15.0px;top:737.8px;font-size:16px;line-height:20px;color:#8a8a8a;letter-spacing:0.438px;">Тип</div>
<div class="abs" style="left:59px;top:726px;width:213px;height:40px;background:#fff;border:1px solid #cfcfcf"></div>
<div class="t" style="left:72.5px;top:739.4px;font-size:16px;line-height:20px;color:#7a7a7a;letter-spacing:0.252px;">Маршрут</div>
<svg class="abs" style="left:242px;top:738px" width="18" height="14"><path d="M2.500 4h12l-6 6z" fill="#808080"/></svg>
<div class="abs" style="left:283px;top:739px;width:1px;height:17px;background:#cfcfcf"></div>
<div class="abs" style="left:470px;top:739px;width:1px;height:17px;background:#cfcfcf"></div>
<div class="abs" style="left:294px;top:727px;width:164px;height:40px;background:#f6f6f6;border:1px solid #e6e6e6"></div>
<div class="t" style="left:310.0px;top:737.8px;font-size:16px;line-height:20px;color:#606060;letter-spacing:-0.005px;">Конфигурировать</div>
<div class="abs" style="left:480px;top:727px;width:100px;height:40px;background:#f6f6f6;border:1px solid #e6e6e6"></div>
<div class="t" style="left:496.5px;top:737.8px;font-size:16px;line-height:20px;color:#606060;letter-spacing:-0.135px;">Показать</div>
<div class="abs" style="left:591px;top:727px;width:92px;height:40px;background:#f6f6f6;border:1px solid #e6e6e6"></div>
<div class="t" style="left:607.0px;top:737.8px;font-size:16px;line-height:20px;color:#606060;letter-spacing:-0.165px;">Экспорт</div>
<div class="abs" style="left:694px;top:727px;width:102px;height:40px;background:#f6f6f6;border:1px solid #e6e6e6"></div>
<div class="t" style="left:710.0px;top:737.8px;font-size:16px;line-height:20px;color:#606060;letter-spacing:-0.021px;">Очистить</div>
<div class="abs" style="left:0;top:775px;width:1920px;height:1px;background:#d6d6d6"></div>
<div class="abs" style="left:0;top:816px;width:1920px;height:2px;background:#d0d0d0"></div>
<div class="t" style="left:13.0px;top:786.8px;font-size:16px;line-height:20px;color:#4d4d4d;letter-spacing:0.438px;">Имя Устройства</div>
<div class="t" style="left:250.0px;top:786.8px;font-size:16px;line-height:20px;color:#4d4d4d;letter-spacing:0.676px;">Корректность</div>
<div class="t" style="left:487.5px;top:786.8px;font-size:16px;line-height:20px;color:#4d4d4d;letter-spacing:0.369px;">Время</div>
<div class="t" style="left:725.0px;top:786.8px;font-size:16px;line-height:20px;color:#4d4d4d;letter-spacing:0.977px;">Широта</div>
<div class="t" style="left:962.5px;top:786.8px;font-size:16px;line-height:20px;color:#4d4d4d;letter-spacing:0.562px;">Долгота</div>
<div class="t" style="left:1200.0px;top:786.8px;font-size:16px;line-height:20px;color:#4d4d4d;letter-spacing:0.253px;">Высота</div>
<div class="t" style="left:1437.5px;top:786.8px;font-size:16px;line-height:20px;color:#4d4d4d;letter-spacing:0.420px;">Скорость</div>
<div class="t" style="left:1675.0px;top:786.8px;font-size:16px;line-height:20px;color:#4d4d4d;letter-spacing:0.034px;">Адрес</div>
<div class="abs" style="left:237px;top:776px;width:1px;height:40px;background:#d6d6d6"></div>
<div class="abs" style="left:474px;top:776px;width:1px;height:40px;background:#d6d6d6"></div>
<div class="abs" style="left:712px;top:776px;width:1px;height:40px;background:#d6d6d6"></div>
<div class="abs" style="left:949px;top:776px;width:1px;height:40px;background:#d6d6d6"></div>
<div class="abs" style="left:1187px;top:776px;width:1px;height:40px;background:#d6d6d6"></div>
<div class="abs" style="left:1424px;top:776px;width:1px;height:40px;background:#d6d6d6"></div>
<div class="abs" style="left:1662px;top:776px;width:1px;height:40px;background:#d6d6d6"></div>
<div class="abs" style="left:0;top:818px;width:1895px;height:40px;background:#fff;border-bottom:1px solid #ececec"></div>
<div class="t" style="left:13.0px;top:829.3px;font-size:16px;line-height:20px;color:#686868;letter-spacing:0.031px;">86059900</div>
<div class="t" style="left:151.5px;top:829.3px;font-size:16px;line-height:20px;color:#686868;letter-spacing:-0.581px;">(тест Ж...</div>
<div class="t" style="left:250.0px;top:829.3px;font-size:16px;line-height:20px;color:#686868;letter-spacing:-1.125px;">Да</div>
<div class="t" style="left:487.0px;top:829.3px;font-size:16px;line-height:20px;color:#686868;letter-spacing:0.121px;">2017-07-24 18:23:36</div>
<div class="t" style="left:724.0px;top:829.3px;font-size:16px;line-height:20px;color:#686868;letter-spacing:0.139px;">55.765678°</div>
<div class="t" style="left:961.0px;top:829.3px;font-size:16px;line-height:20px;color:#686868;letter-spacing:0.189px;">37.532388°</div>
<div class="t" style="left:1198.0px;top:829.3px;font-size:16px;line-height:20px;color:#686868;letter-spacing:-0.016px;">161.8</div>
<div class="t" style="left:1435.0px;top:829.3px;font-size:16px;line-height:20px;color:#686868;letter-spacing:0.123px;">0.0 км/ч</div>
<div class="t" style="left:1672.0px;top:829.3px;font-size:16px;line-height:20px;color:#686868;letter-spacing:-0.098px;">8Ac10 2-ya Magistralnaya u...</div>
<div class="abs" style="left:0;top:858px;width:1895px;height:40.5px;background:#f6f6f6;border-bottom:1px solid #ececec"></div>
<div class="t" style="left:13.0px;top:869.3px;font-size:16px;line-height:20px;color:#686868;letter-spacing:0.038px;">860599001</div>
<div class="t" style="left:151.5px;top:869.3px;font-size:16px;line-height:20px;color:#686868;letter-spacing:-0.581px;">(тест Ж...</div>
<div class="t" style="left:250.0px;top:869.3px;font-size:16px;line-height:20px;color:#686868;letter-spacing:-1.125px;">Да</div>
<div class="t" style="left:487.0px;top:869.3px;font-size:16px;line-height:20px;color:#686868;letter-spacing:0.121px;">2017-07-24 18:28:35</div>
<div class="t" style="left:724.0px;top:869.3px;font-size:16px;line-height:20px;color:#686868;letter-spacing:0.139px;">55.765827°</div>
<div class="t" style="left:961.0px;top:869.3px;font-size:16px;line-height:20px;color:#686868;letter-spacing:0.189px;">37.532140°</div>
<div class="t" style="left:1198.0px;top:869.3px;font-size:16px;line-height:20px;color:#686868;letter-spacing:-0.016px;">150.3</div>
<div class="t" style="left:1435.0px;top:869.3px;font-size:16px;line-height:20px;color:#686868;letter-spacing:0.123px;">0.0 км/ч</div>
<div class="t" style="left:1672.0px;top:869.3px;font-size:16px;line-height:20px;color:#686868;letter-spacing:-0.032px;">5A 1-y Magistralnyy tup., M...</div>
<div class="abs" style="left:0;top:898.5px;width:1895px;height:40px;background:#fff;border-bottom:1px solid #ececec"></div>
<div class="t" style="left:13.0px;top:909.8px;font-size:16px;line-height:20px;color:#686868;letter-spacing:0.031px;">86059900</div>
<div class="t" style="left:151.5px;top:909.8px;font-size:16px;line-height:20px;color:#686868;letter-spacing:-0.581px;">(тест Ж...</div>
<div class="t" style="left:250.0px;top:909.8px;font-size:16px;line-height:20px;color:#686868;letter-spacing:-0.255px;">Нет</div>
<div class="t" style="left:487.0px;top:909.8px;font-size:16px;line-height:20px;color:#686868;letter-spacing:0.121px;">2017-07-24 18:32:38</div>
<div class="t" style="left:724.0px;top:909.8px;font-size:16px;line-height:20px;color:#686868;letter-spacing:0.139px;">55.766086°</div>
<div class="t" style="left:961.0px;top:909.8px;font-size:16px;line-height:20px;color:#686868;letter-spacing:0.189px;">37.531915°</div>
<div class="t" style="left:1198.0px;top:909.8px;font-size:16px;line-height:20px;color:#686868;letter-spacing:-0.073px;">177</div>
<div class="t" style="left:1435.0px;top:909.8px;font-size:16px;line-height:20px;color:#686868;letter-spacing:0.123px;">8.1 км/ч</div>
<div class="abs" style="left:0;top:938.5px;width:1895px;height:40px;background:#f6f6f6;border-bottom:1px solid #ececec"></div>
<div class="t" style="left:13.0px;top:949.8px;font-size:16px;line-height:20px;color:#686868;letter-spacing:0.031px;">86059900</div>
<div class="t" style="left:151.5px;top:949.8px;font-size:16px;line-height:20px;color:#686868;letter-spacing:-0.581px;">(тест Ж...</div>
<div class="t" style="left:250.0px;top:949.8px;font-size:16px;line-height:20px;color:#686868;letter-spacing:-0.255px;">Нет</div>
<div class="t" style="left:487.0px;top:949.8px;font-size:16px;line-height:20px;color:#686868;letter-spacing:0.121px;">2017-07-24 18:32:38</div>
<div class="t" style="left:724.0px;top:949.8px;font-size:16px;line-height:20px;color:#686868;letter-spacing:0.139px;">55.766086°</div>
<div class="t" style="left:961.0px;top:949.8px;font-size:16px;line-height:20px;color:#686868;letter-spacing:0.189px;">37.531915°</div>
<div class="t" style="left:1198.0px;top:949.8px;font-size:16px;line-height:20px;color:#686868;letter-spacing:-0.073px;">177</div>
<div class="t" style="left:1435.0px;top:949.8px;font-size:16px;line-height:20px;color:#686868;letter-spacing:0.123px;">8.1 км/ч</div>
<div class="abs" style="left:0;top:978.5px;width:1895px;height:40.5px;background:#fff;border-bottom:1px solid #ececec"></div>
<div class="t" style="left:13.0px;top:989.8px;font-size:16px;line-height:20px;color:#686868;letter-spacing:0.031px;">86059900</div>
<div class="t" style="left:151.5px;top:989.8px;font-size:16px;line-height:20px;color:#686868;letter-spacing:-0.581px;">(тест Ж...</div>
<div class="t" style="left:250.0px;top:989.8px;font-size:16px;line-height:20px;color:#686868;letter-spacing:-0.255px;">Нет</div>
<div class="t" style="left:487.0px;top:989.8px;font-size:16px;line-height:20px;color:#686868;letter-spacing:0.121px;">2017-07-24 18:32:38</div>
<div class="t" style="left:724.0px;top:989.8px;font-size:16px;line-height:20px;color:#686868;letter-spacing:0.139px;">55.766086°</div>
<div class="t" style="left:961.0px;top:989.8px;font-size:16px;line-height:20px;color:#686868;letter-spacing:0.189px;">37.531915°</div>
<div class="t" style="left:1198.0px;top:989.8px;font-size:16px;line-height:20px;color:#686868;letter-spacing:-0.073px;">177</div>
<div class="t" style="left:1435.0px;top:989.8px;font-size:16px;line-height:20px;color:#686868;letter-spacing:0.123px;">8.1 км/ч</div>
<div class="abs" style="left:0;top:1019px;width:1895px;height:11px;background:#f6f6f6;border-bottom:1px solid #ececec"></div>
<div class="abs" style="left:1895px;top:818px;width:25px;height:212px;background:#f4f4f4"></div>
<div class="abs" style="left:1901px;top:838px;width:16px;height:17px;background:#c1c1c1"></div>
<svg class="abs" style="left:1897px;top:818px" width="23" height="210"><path d="M7.500 13l4.500-5l4.500 5z" fill="#a3a3a3"/><path d="M7 197l5 5.500l5-5.500z" fill="#505050"/></svg>
<div class="abs" style="left:0;top:1030px;width:1920px;height:50px;background:#1f2125"></div>
<svg class="abs" style="left:0;top:1030px" width="1920" height="50" viewBox="0 1029 1920 50"><rect x="702" y="1029" width="61" height="52" fill="#3d3f43"/><rect x="148" y="1075.500" width="51" height="4" fill="#76b9ed"/><rect x="273" y="1075.500" width="51" height="4" fill="#76b9ed"/><rect x="336" y="1075.500" width="50" height="4" fill="#76b9ed"/><rect x="397" y="1075.500" width="51" height="4" fill="#76b9ed"/><rect x="459" y="1075.500" width="51" height="4" fill="#76b9ed"/><rect x="521" y="1075.500" width="51" height="4" fill="#76b9ed"/><rect x="583" y="1075.500" width="51" height="4" fill="#76b9ed"/><rect x="645" y="1075.500" width="51" height="4" fill="#76b9ed"/><rect x="701.5" y="1075.500" width="60" height="4" fill="#76b9ed"/><rect x="769" y="1075.500" width="49" height="4" fill="#76b9ed"/><path d="M20 1047.500l8-1.200v7.700h-8zM29 1046.100l10.500-1.600v9.500h-10.500zM20 1055h8v7.700l-8-1.200zM29 1055h10.500v9.500l-10.500-1.600z" fill="#fff"/><circle cx="93" cy="1051.500" r="6.500" fill="none" stroke="#fff" stroke-width="1.800"/><path d="M88.500 1056.500l-7.500 8" stroke="#fff" stroke-width="2"/><rect x="126" y="1041" width="1" height="26" fill="#5a5a5a"/><rect x="129" y="1041" width="1" height="26" fill="#5a5a5a"/><path d="M160 1044h9l2 3h16v19h-27z" fill="#f7c948"/><rect x="160" y="1050" width="27" height="16" fill="#fbd96b"/><rect x="166" y="1056" width="15" height="10" fill="#4aa0e0"/><rect x="169" y="1060" width="9" height="6" fill="#fbd96b"/><circle cx="236" cy="1054" r="14" fill="#fff"/><circle cx="236" cy="1054" r="12.500" fill="#ee2222"/><path d="M230 1045l6 9v9M242 1045l-6 9" stroke="#fff" stroke-width="3" fill="none"/><ellipse cx="307.3" cy="1054.0" rx="3.700" ry="3.700" fill="#5bd13c"/><ellipse cx="304.6" cy="1060.6" rx="3.700" ry="3.700" fill="#5bd13c"/><ellipse cx="298.0" cy="1063.3" rx="3.700" ry="3.700" fill="#5bd13c"/><ellipse cx="291.4" cy="1060.6" rx="3.700" ry="3.700" fill="#5bd13c"/><ellipse cx="288.7" cy="1054.0" rx="3.700" ry="3.700" fill="#5bd13c"/><ellipse cx="291.4" cy="1047.4" rx="3.700" ry="3.700" fill="#5bd13c"/><ellipse cx="298.0" cy="1044.7" rx="3.700" ry="3.700" fill="#5bd13c"/><ellipse cx="304.6" cy="1047.4" rx="3.700" ry="3.700" fill="#5bd13c"/><circle cx="298" cy="1054" r="5" fill="#f6b700"/><circle cx="298" cy="1054" r="2.500" fill="#e84030"/><circle cx="354" cy="1048" r="8" fill="#12a5e8"/><circle cx="365" cy="1060" r="8" fill="#12a5e8"/><circle cx="359.500" cy="1054" r="11.500" fill="#12a5e8"/><text x="359.500" y="1061.500" font-size="21" font-weight="bold" fill="#fff" text-anchor="middle" font-family="Liberation Sans">S</text><circle cx="370" cy="1065" r="5.500" fill="#f5a31a" stroke="#222" stroke-width="1"/><text x="370" y="1068" font-size="8" font-weight="bold" fill="#222" text-anchor="middle" font-family="Liberation Sans">6</text><polygon points="433.77,1051.66 434.00,1054.00 430.34,1055.66 429.85,1057.25 431.98,1060.67 430.49,1062.49 426.72,1061.07 425.25,1061.85 424.34,1065.77 422.00,1066.00 420.34,1062.34 418.75,1061.85 415.33,1063.98 413.51,1062.49 414.93,1058.72 414.15,1057.25 410.23,1056.34 410.00,1054.00 413.66,1052.34 414.15,1050.75 412.02,1047.33 413.51,1045.51 417.28,1046.93 418.75,1046.15 419.66,1042.23 422.00,1042.00 423.66,1045.66 425.25,1046.15 428.67,1044.02 430.49,1045.51 429.07,1049.28 429.85,1050.75" fill="#fff"/><circle cx="422" cy="1054" r="5.500" fill="#1f2125"/><rect x="479" y="1043" width="20" height="23" fill="#fff"/><path d="M470 1044.500l17-3v25l-17-3z" fill="#1e7145"/><path d="M474 1049l8 10m0-10l-8 10" stroke="#fff" stroke-width="2.200"/><path d="M489 1046h8M489 1050h8M489 1054h8M489 1058h8M489 1062h8" stroke="#1e7145" stroke-width="1.500"/><circle cx="546" cy="1054" r="14" fill="#2ea6de"/><path d="M537 1054l17-7l-3 15l-5-3.500l-2.500 2.500l-0.500-4.500l7-7l-9 6z" fill="#fff"/><path d="M594 1052l14-8l10 8l-9 6z" fill="#f7c948"/><path d="M604 1058l9-5l6 12z" fill="#e9e9e9"/><path d="M594 1052l4 6l8-3" fill="#d9a520"/><rect x="656" y="1041" width="22" height="26" fill="#f0b838"/><path d="M656 1049h22M656 1058h22" stroke="#8a5a10" stroke-width="1.500"/><rect x="676" y="1039" width="6" height="30" fill="#c8c8c8"/><rect x="660" y="1051" width="9" height="4" fill="#fff"/><rect x="660" y="1060" width="9" height="4" fill="#fff"/><circle cx="732" cy="1054" r="14" fill="#fbc116"/><path d="M732 1054L719.900 1047A14 14 0 0 1 744.100 1047Z" fill="#e33b2e"/><path d="M732 1054L719.900 1047A14 14 0 0 0 732 1068Z" fill="#2ba24c"/><path d="M719.900 1047A14 14 0 0 1 744.100 1047L732 1047z" fill="#e33b2e"/><circle cx="732" cy="1054" r="6.500" fill="#fff"/><circle cx="732" cy="1054" r="5" fill="#4a8af4"/><ellipse cx="792" cy="1056" rx="13" ry="10.500" fill="#e8e0d0" transform="rotate(-20 792 1056)"/><circle cx="786" cy="1052" r="2.300" fill="#e33b2e"/><circle cx="792" cy="1049" r="2.300" fill="#2ba24c"/><circle cx="798" cy="1051" r="2.300" fill="#4a8af4"/><circle cx="786" cy="1059" r="2.300" fill="#f7c948"/><path d="M796 1062l10-18" stroke="#d08030" stroke-width="3"/><circle cx="1581" cy="1055" r="13" fill="#fff"/><circle cx="1581" cy="1055" r="11" fill="#1e9be0"/><text x="1581" y="1062.500" font-size="21" font-weight="bold" fill="#fff" text-anchor="middle" font-family="Liberation Sans">?</text><circle cx="1591.500" cy="1062.500" r="6" fill="#e8202a"/><rect x="1590.600" y="1058.500" width="1.800" height="5" fill="#fff"/><rect x="1590.600" y="1064.500" width="1.800" height="1.800" fill="#fff"/><rect x="1914" y="1029" width="1" height="52" fill="#55575b"/><path d="M1610 1059.500l7.500-8l7.500 8" stroke="#fff" stroke-width="1.500" fill="none"/><rect x="1641.500" y="1049.500" width="17" height="10" fill="none" stroke="#fff" stroke-width="1.300"/><rect x="1644" y="1052" width="12" height="5" fill="#fff"/><rect x="1638" y="1052" width="3" height="4" fill="#fff"/><path d="M1636 1046v5" stroke="#fff"/><rect x="1669.500" y="1047.500" width="15" height="11" fill="none" stroke="#fff" stroke-width="1.300"/><path d="M1673 1063h8M1677 1059v4M1667 1046v14" stroke="#fff" stroke-width="1.300"/><path d="M1699 1052h3l4-3.500v12l-4-3.500h-3z" fill="none" stroke="#fff" stroke-width="1.200"/><path d="M1709 1051.500a4 4 0 0 1 0 6M1712 1049a7 7 0 0 1 0 11" stroke="#bbb" stroke-width="1.200" fill="none"/><path d="M1869.500 1044.500h19v14h-13l-3.500 3.500v-3.500h-2.500z" fill="#fff"/><path d="M1873 1049h12M1873 1052.500h12M1873 1056h8" stroke="#1d1d1f" stroke-width="1.200"/><circle cx="1888" cy="1064" r="8.500" fill="#1f2125" stroke="#fff" stroke-width="1.300"/><text x="1888" y="1069" font-size="13" fill="#fff" text-anchor="middle" font-family="Liberation Sans">1</text></svg>
<div class="t" style="left:1732.0px;top:1046.3px;font-size:15px;line-height:18px;color:#fff;letter-spacing:-1.177px;">РУС</div>
<div class="t" style="left:1794.0px;top:1035.3px;font-size:15px;line-height:18px;color:#fff;letter-spacing:-0.709px;">17:04</div>
<div class="t" style="left:1776.0px;top:1058.3px;font-size:15px;line-height:18px;color:#fff;letter-spacing:-0.559px;">25.07.2017</div>
<svg class="abs" style="left:70px;top:805px" width="100" height="240" viewBox="70 805 100 240"><path d="M87.200 818 L142.800 818 L142.800 813.500 L150.800 813.500 L150.800 857 L151 897 L155.300 899 L155.300 938 L153 940 L153 977 L147.400 979 L147.400 1008 L135 1019 L100.800 1019 L100.800 1040.500 L91.800 1040.500 L91.800 1022 L86 1022 L86 1039.400 L77 1039.400 L77 1018 L81.600 1000 L81.600 979 L85 977 L85 940 L92 937 L92 899 L89.500 897 L89.500 858 L87.200 856 Z" fill="#fff"/></svg>
</body></html>
